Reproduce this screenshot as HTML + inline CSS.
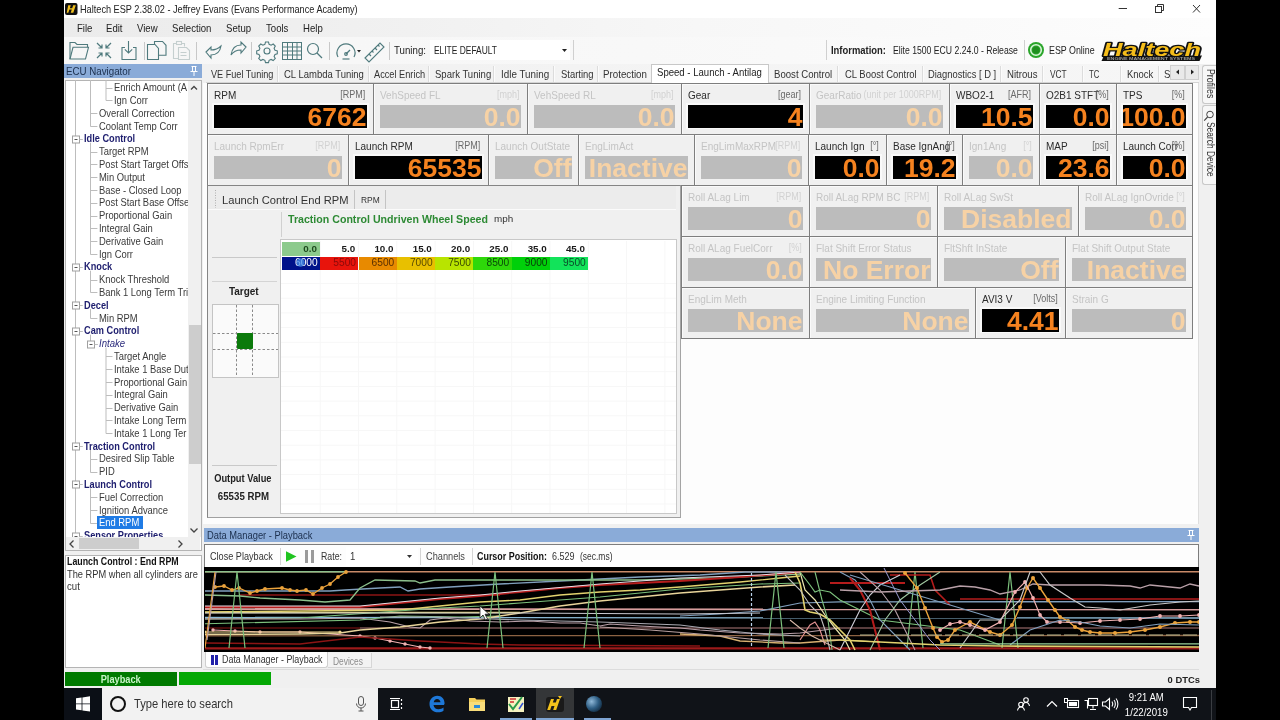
<!DOCTYPE html>
<html><head><meta charset="utf-8"><style>
html,body{margin:0;padding:0;width:1280px;height:720px;overflow:hidden;background:#000;}
body{position:relative;font-family:"Liberation Sans",sans-serif;}
.a{position:absolute;box-sizing:border-box;}
.t{position:absolute;white-space:nowrap;}
#root{position:absolute;left:0;top:0;width:1280px;height:720px;will-change:transform;}
svg{position:absolute;overflow:visible;}
</style></head><body><div id="root">
<div class="a" style="left:0px;top:0px;width:1280px;height:720px;background:#000;"></div>
<div class="a" style="left:64px;top:0px;width:1152px;height:688px;background:#f0f0f0;"></div>
<div class="a" style="left:64px;top:0px;width:1152px;height:18px;background:#ffffff;"></div>
<div class="a" style="left:64px;top:18px;width:1152px;height:19px;background:linear-gradient(to right,#ebebeb 0%,#f1f1f1 30%,#f7f7f7 55%,#fdfdfd 100%);"></div>
<div class="a" style="left:64px;top:37px;width:1152px;height:27px;background:linear-gradient(to right,#f6f6f6 0%,#f8f8f8 50%,#fcfcfc 100%);"></div>
<svg style="left:65px;top:3px" width="13" height="12" viewBox="0 0 13 12"><rect x="0" y="0" width="12.5" height="12" rx="2" fill="#111"/><path d="M3.2 2.2h2.6l-1 3h2.4l1-3h2.6l-2.5 7.6h-2.6l1.1-3.2h-2.4l-1.1 3.2H1.7z" fill="#f0c020"/></svg>
<div class="t" style="left:80.00px;top:3.14px;font-size:10.2px;line-height:13px;color:#222;transform:scaleX(0.8992);transform-origin:left center;">Haltech ESP 2.38.02 - Jeffrey Evans (Evans Performance Academy)</div>
<svg style="left:1110px;top:0px" width="106" height="18" viewBox="0 0 106 18"><line x1="8.7" y1="8.5" x2="17" y2="8.5" stroke="#333" stroke-width="1"/><rect x="45.5" y="6.5" width="6" height="6" fill="none" stroke="#333" stroke-width="1"/><path d="M47.5 6.5V4.5h6v6h-2" fill="none" stroke="#333" stroke-width="1"/><path d="M83 5l7 7.5M90 5l-7 7.5" stroke="#333" stroke-width="1"/></svg>
<div class="t" style="left:77.00px;top:21.64px;font-size:10.2px;line-height:13px;color:#222;transform:scaleX(0.9412);transform-origin:left center;">File</div>
<div class="t" style="left:106.00px;top:21.64px;font-size:10.2px;line-height:13px;color:#222;transform:scaleX(0.9412);transform-origin:left center;">Edit</div>
<div class="t" style="left:137.00px;top:21.64px;font-size:10.2px;line-height:13px;color:#222;transform:scaleX(0.9412);transform-origin:left center;">View</div>
<div class="t" style="left:172.00px;top:21.64px;font-size:10.2px;line-height:13px;color:#222;transform:scaleX(0.9412);transform-origin:left center;">Selection</div>
<div class="t" style="left:226.00px;top:21.64px;font-size:10.2px;line-height:13px;color:#222;transform:scaleX(0.9412);transform-origin:left center;">Setup</div>
<div class="t" style="left:266.00px;top:21.64px;font-size:10.2px;line-height:13px;color:#222;transform:scaleX(0.9412);transform-origin:left center;">Tools</div>
<div class="t" style="left:303.00px;top:21.64px;font-size:10.2px;line-height:13px;color:#222;transform:scaleX(0.9412);transform-origin:left center;">Help</div>
<svg style="left:64px;top:37px" width="760" height="27" viewBox="0 0 760 27"><path d="M6 22V5.5h5l2 2h10.5v2.8" fill="none" stroke="#4f7a7d" stroke-width="1.1"/><path d="M6 22l3-11.7h15.5l-3 11.7z" fill="none" stroke="#4f7a7d" stroke-width="1.1"/><g stroke="#4f7a7d" stroke-width="1.2" fill="none"><path d="M33 6l5 5M38 7.5V11h-3.5M47 6l-5 5M42 7.5V11h3.5M33 21l5-5M38 19.5V16h-3.5M47 21l-5-5M42 19.5V16h3.5"/></g><g stroke="#4f7a7d" stroke-width="1.1" fill="none"><path d="M64.5 4v12M60.8 12.3l3.7 3.7 3.7-3.7M61 10.5h-3v12h14v-12h-3"/></g><line x1="80.5" y1="5" x2="80.5" y2="23" stroke="#c8c8c8"/><g stroke="#4f7a7d" stroke-width="1.1" fill="none"><path d="M83.5 7.5v15h11v-11l-3.5-4z"/><path d="M90.5 7.5V4.5h8l3.5 3.8v10h-7.5"/></g><g stroke="#c5cfcf" stroke-width="1.1" fill="none"><path d="M112.5 6.5h-3v15h5"/><path d="M117.5 6.5h3v3"/><rect x="112.5" y="4.5" width="5" height="3"/><path d="M114.5 10.5h8l3 3v9h-11z"/><path d="M116.5 15.5h6M116.5 18.5h6"/></g><line x1="132.5" y1="5" x2="132.5" y2="23" stroke="#c8c8c8"/><g stroke="#4f7a7d" stroke-width="1.1" fill="none"><path d="M142 15l5-5v3c5 0 8-2 10-4-1 6-5 9-10 9v3z"/><path d="M182 10l-5-5v3c-5 0-9 3-10 10 2-3 5-5 10-5v3z"/></g><line x1="187.5" y1="5" x2="187.5" y2="23" stroke="#c8c8c8"/><g transform="translate(203,14)" stroke="#4f7a7d" stroke-width="1.1" fill="none"><circle r="3"/><path d="M-1.5 -9h3l0.6 2.3 2 0.9 2.1-1.2 2.1 2.1-1.2 2.1 0.9 2 2.3 0.6v3l-2.3 0.6-0.9 2 1.2 2.1-2.1 2.1-2.1-1.2-2 0.9-0.6 2.3h-3l-0.6-2.3-2-0.9-2.1 1.2-2.1-2.1 1.2-2.1-0.9-2-2.3-0.6v-3l2.3-0.6 0.9-2-1.2-2.1 2.1-2.1 2.1 1.2 2-0.9z"/></g><g stroke="#4f7a7d" stroke-width="1" fill="none"><rect x="218.5" y="5.5" width="19" height="17"/><path d="M223.5 5.5v17M228.5 5.5v17M233 5.5v17M218.5 10h19M218.5 14h19M218.5 18h19"/></g><g stroke="#4f7a7d" stroke-width="1.2" fill="none"><circle cx="249" cy="12" r="5.5"/><path d="M253 16l5 5"/></g><line x1="265.5" y1="5" x2="265.5" y2="23" stroke="#c8c8c8"/><g stroke="#4f7a7d" stroke-width="1.2" fill="none"><path d="M274 20a9 9 0 1 1 16 0"/><path d="M282 17l4-4"/><circle cx="282" cy="17" r="1.3"/><path d="M278.5 22h7"/></g><path d="M293 13h4l-2 2.5z" fill="#222"/><g stroke="#4f7a7d" stroke-width="1.1" fill="none"><path d="M301 21l15-15 4 4-15 15z"/><path d="M305 17l2 2M308 14l1.5 1.5M311 11l2 2M314 8l1.5 1.5"/></g><line x1="325.5" y1="5" x2="325.5" y2="23" stroke="#c8c8c8"/></svg>
<div class="t" style="left:394.00px;top:44.14px;font-size:10.2px;line-height:13px;color:#222;transform:scaleX(0.9512);transform-origin:left center;">Tuning:</div>
<div class="a" style="left:430px;top:40px;width:140px;height:20px;background:#ffffff;"></div>
<div class="t" style="left:434.00px;top:44.14px;font-size:10.2px;line-height:13px;color:#222;transform:scaleX(0.8254);transform-origin:left center;">ELITE DEFAULT</div>
<svg style="left:562px;top:49px" width="6" height="4"><path d="M0 0h5l-2.5 3z" fill="#222"/></svg>
<div class="a" style="left:573px;top:40px;width:1px;height:20px;background:#d0d0d0;"></div>
<div class="a" style="left:826px;top:40px;width:1px;height:20px;background:#d0d0d0;"></div>
<div class="t" style="left:831.00px;top:44.14px;font-size:10.2px;line-height:13px;color:#222;font-weight:bold;transform:scaleX(0.9246);transform-origin:left center;">Information:</div>
<div class="t" style="left:892.50px;top:44.14px;font-size:10.2px;line-height:13px;color:#222;transform:scaleX(0.8480);transform-origin:left center;">Elite 1500 ECU 2.24.0 - Release</div>
<div class="a" style="left:1024px;top:40px;width:1px;height:20px;background:#d0d0d0;"></div>
<svg style="left:1027px;top:41px" width="18" height="18" viewBox="0 0 18 18"><circle cx="9" cy="9" r="8" fill="#2aa52a"/><circle cx="9" cy="9" r="5.3" fill="none" stroke="#d8f5d8" stroke-width="1.6"/><circle cx="9" cy="9" r="3.6" fill="#1f8f1f"/></svg>
<div class="t" style="left:1048.70px;top:44.14px;font-size:10.2px;line-height:13px;color:#222;transform:scaleX(0.8698);transform-origin:left center;">ESP Online</div>
<svg style="left:1098px;top:38px" width="110" height="26" viewBox="0 0 110 26"><path d="M6 17.5h98l-2.5 5.5H3.5z" fill="#111"/><text x="5" y="18" textLength="98" lengthAdjust="spacingAndGlyphs" font-family="Liberation Sans" font-weight="bold" font-style="italic" font-size="19" fill="#f5bd1a" stroke="#111" stroke-width="2.6" paint-order="stroke" stroke-linejoin="round">Haltech</text><text x="9" y="22" textLength="88" lengthAdjust="spacingAndGlyphs" font-family="Liberation Sans" font-weight="bold" font-size="4" fill="#9a9a9a">ENGINE MANAGEMENT SYSTEMS</text></svg>
<div class="a" style="left:64px;top:64px;width:138px;height:14px;background:#8aabd8;"></div>
<div class="t" style="left:66.00px;top:64.94px;font-size:10.2px;line-height:13px;color:#1b2f4d;transform:scaleX(0.9556);transform-origin:left center;">ECU Navigator</div>
<svg style="left:189px;top:65px" width="10" height="12" viewBox="0 0 10 12"><path d="M2.5 1.5h5M3.5 1.5v5M6.5 1.5v5M1.5 6.5h7M5 6.5v4.5" stroke="#fff" stroke-width="1" fill="none"/></svg>
<div class="a" style="left:64px;top:78px;width:138px;height:474px;background:#f0f0f0;"></div>
<div class="a" style="left:65px;top:80px;width:137px;height:471px;background:#ffffff;border:1px solid #b4b4b4;"></div>
<div class="a" style="left:188px;top:81px;width:13px;height:456px;background:#f0f0f0;"></div>
<div class="a" style="left:188.5px;top:325px;width:12.0px;height:139px;background:#cdcdcd;"></div>
<svg style="left:189px;top:84px" width="10" height="8"><path d="M2 5.5l3-3 3 3" stroke="#444" stroke-width="1.3" fill="none"/></svg>
<svg style="left:189px;top:526px" width="10" height="8"><path d="M1.5 2.5l3.5 3.5 3.5-3.5" stroke="#444" stroke-width="1.3" fill="none"/></svg>
<div class="a" style="left:66px;top:537px;width:134px;height:13px;background:#f0f0f0;"></div>
<div class="a" style="left:79px;top:538px;width:60px;height:11px;background:#cdcdcd;"></div>
<svg style="left:68px;top:539px" width="8" height="10"><path d="M5.5 1.5l-3.5 3.5 3.5 3.5" stroke="#444" stroke-width="1.3" fill="none"/></svg>
<svg style="left:176px;top:539px" width="8" height="10"><path d="M2.5 1.5l3.5 3.5-3.5 3.5" stroke="#444" stroke-width="1.3" fill="none"/></svg>
<svg style="left:0;top:0" width="1280" height="720" viewBox="0 0 1280 720"><line x1="75.5" y1="80" x2="75.5" y2="537" stroke="#bdbdbd" stroke-width="1"/><line x1="90.5" y1="80" x2="90.5" y2="126.5" stroke="#bdbdbd" stroke-width="1"/><line x1="106" y1="80" x2="106" y2="100.5" stroke="#bdbdbd" stroke-width="1"/><line x1="90.5" y1="142.7" x2="90.5" y2="254.5" stroke="#bdbdbd" stroke-width="1"/><line x1="90.5" y1="270.70000000000005" x2="90.5" y2="292.5" stroke="#bdbdbd" stroke-width="1"/><line x1="90.5" y1="309.1" x2="90.5" y2="318.5" stroke="#bdbdbd" stroke-width="1"/><line x1="90.5" y1="334.70000000000005" x2="90.5" y2="344.5" stroke="#bdbdbd" stroke-width="1"/><line x1="90.5" y1="449.90000000000003" x2="90.5" y2="472.5" stroke="#bdbdbd" stroke-width="1"/><line x1="90.5" y1="488.3" x2="90.5" y2="523.5" stroke="#bdbdbd" stroke-width="1"/><line x1="106" y1="347.5" x2="106" y2="433.5" stroke="#bdbdbd" stroke-width="1"/><line x1="106.0" y1="88.5" x2="112.5" y2="88.5" stroke="#bdbdbd" stroke-width="1"/><line x1="106.0" y1="100.5" x2="112.5" y2="100.5" stroke="#bdbdbd" stroke-width="1"/><line x1="90.5" y1="113.5" x2="97.4" y2="113.5" stroke="#bdbdbd" stroke-width="1"/><line x1="90.5" y1="126.5" x2="97.4" y2="126.5" stroke="#bdbdbd" stroke-width="1"/><rect x="72.5" y="136.0" width="7" height="7" fill="#fff" stroke="#a0a0a0" stroke-width="1"/><line x1="74.5" y1="139.5" x2="77.5" y2="139.5" stroke="#555" stroke-width="1"/><line x1="79.5" y1="139.5" x2="82.8" y2="139.5" stroke="#bdbdbd" stroke-width="1"/><line x1="90.5" y1="152.5" x2="97.4" y2="152.5" stroke="#bdbdbd" stroke-width="1"/><line x1="90.5" y1="164.5" x2="97.4" y2="164.5" stroke="#bdbdbd" stroke-width="1"/><line x1="90.5" y1="177.5" x2="97.4" y2="177.5" stroke="#bdbdbd" stroke-width="1"/><line x1="90.5" y1="190.5" x2="97.4" y2="190.5" stroke="#bdbdbd" stroke-width="1"/><line x1="90.5" y1="203.5" x2="97.4" y2="203.5" stroke="#bdbdbd" stroke-width="1"/><line x1="90.5" y1="216.5" x2="97.4" y2="216.5" stroke="#bdbdbd" stroke-width="1"/><line x1="90.5" y1="228.5" x2="97.4" y2="228.5" stroke="#bdbdbd" stroke-width="1"/><line x1="90.5" y1="241.5" x2="97.4" y2="241.5" stroke="#bdbdbd" stroke-width="1"/><line x1="90.5" y1="254.5" x2="97.4" y2="254.5" stroke="#bdbdbd" stroke-width="1"/><rect x="72.5" y="264.0" width="7" height="7" fill="#fff" stroke="#a0a0a0" stroke-width="1"/><line x1="74.5" y1="267.5" x2="77.5" y2="267.5" stroke="#555" stroke-width="1"/><line x1="79.5" y1="267.5" x2="82.8" y2="267.5" stroke="#bdbdbd" stroke-width="1"/><line x1="90.5" y1="280.5" x2="97.4" y2="280.5" stroke="#bdbdbd" stroke-width="1"/><line x1="90.5" y1="292.5" x2="97.4" y2="292.5" stroke="#bdbdbd" stroke-width="1"/><rect x="72.5" y="302.0" width="7" height="7" fill="#fff" stroke="#a0a0a0" stroke-width="1"/><line x1="74.5" y1="305.5" x2="77.5" y2="305.5" stroke="#555" stroke-width="1"/><line x1="79.5" y1="305.5" x2="82.8" y2="305.5" stroke="#bdbdbd" stroke-width="1"/><line x1="90.5" y1="318.5" x2="97.4" y2="318.5" stroke="#bdbdbd" stroke-width="1"/><rect x="72.5" y="328.0" width="7" height="7" fill="#fff" stroke="#a0a0a0" stroke-width="1"/><line x1="74.5" y1="331.5" x2="77.5" y2="331.5" stroke="#555" stroke-width="1"/><line x1="79.5" y1="331.5" x2="82.8" y2="331.5" stroke="#bdbdbd" stroke-width="1"/><rect x="87.5" y="341.0" width="7" height="7" fill="#fff" stroke="#a0a0a0" stroke-width="1"/><line x1="89.5" y1="344.5" x2="92.5" y2="344.5" stroke="#555" stroke-width="1"/><line x1="94.5" y1="344.5" x2="97.9" y2="344.5" stroke="#bdbdbd" stroke-width="1"/><line x1="106.0" y1="356.5" x2="112.5" y2="356.5" stroke="#bdbdbd" stroke-width="1"/><line x1="106.0" y1="369.5" x2="112.5" y2="369.5" stroke="#bdbdbd" stroke-width="1"/><line x1="106.0" y1="382.5" x2="112.5" y2="382.5" stroke="#bdbdbd" stroke-width="1"/><line x1="106.0" y1="395.5" x2="112.5" y2="395.5" stroke="#bdbdbd" stroke-width="1"/><line x1="106.0" y1="408.5" x2="112.5" y2="408.5" stroke="#bdbdbd" stroke-width="1"/><line x1="106.0" y1="420.5" x2="112.5" y2="420.5" stroke="#bdbdbd" stroke-width="1"/><line x1="106.0" y1="433.5" x2="112.5" y2="433.5" stroke="#bdbdbd" stroke-width="1"/><rect x="72.5" y="443.0" width="7" height="7" fill="#fff" stroke="#a0a0a0" stroke-width="1"/><line x1="74.5" y1="446.5" x2="77.5" y2="446.5" stroke="#555" stroke-width="1"/><line x1="79.5" y1="446.5" x2="82.8" y2="446.5" stroke="#bdbdbd" stroke-width="1"/><line x1="90.5" y1="459.5" x2="97.4" y2="459.5" stroke="#bdbdbd" stroke-width="1"/><line x1="90.5" y1="472.5" x2="97.4" y2="472.5" stroke="#bdbdbd" stroke-width="1"/><rect x="72.5" y="481.0" width="7" height="7" fill="#fff" stroke="#a0a0a0" stroke-width="1"/><line x1="74.5" y1="484.5" x2="77.5" y2="484.5" stroke="#555" stroke-width="1"/><line x1="79.5" y1="484.5" x2="82.8" y2="484.5" stroke="#bdbdbd" stroke-width="1"/><line x1="90.5" y1="497.5" x2="97.4" y2="497.5" stroke="#bdbdbd" stroke-width="1"/><line x1="90.5" y1="510.5" x2="97.4" y2="510.5" stroke="#bdbdbd" stroke-width="1"/><line x1="90.5" y1="523.5" x2="97.4" y2="523.5" stroke="#bdbdbd" stroke-width="1"/><rect x="72.5" y="533.0" width="7" height="7" fill="#fff" stroke="#a0a0a0" stroke-width="1"/><line x1="74.5" y1="536.5" x2="77.5" y2="536.5" stroke="#555" stroke-width="1"/><line x1="79.5" y1="536.5" x2="82.8" y2="536.5" stroke="#bdbdbd" stroke-width="1"/></svg>
<div class="a" style="left:96.5px;top:516px;width:46.5px;height:12.5px;background:#1f7be5;"></div>
<div class="t" style="left:114.00px;top:81.14px;font-size:10.2px;line-height:13px;color:#3a3a3a;transform:scaleX(0.9224);transform-origin:left center;">Enrich Amount (A</div>
<div class="t" style="left:114.00px;top:93.94px;font-size:10.2px;line-height:13px;color:#3a3a3a;transform:scaleX(0.9224);transform-origin:left center;">Ign Corr</div>
<div class="t" style="left:98.90px;top:106.74px;font-size:10.2px;line-height:13px;color:#3a3a3a;transform:scaleX(0.9224);transform-origin:left center;">Overall Correction</div>
<div class="t" style="left:98.90px;top:119.54px;font-size:10.2px;line-height:13px;color:#3a3a3a;transform:scaleX(0.9224);transform-origin:left center;">Coolant Temp Corr</div>
<div class="t" style="left:83.80px;top:132.34px;font-size:10.2px;line-height:13px;color:#1d1d6e;font-weight:bold;transform:scaleX(0.9035);transform-origin:left center;">Idle Control</div>
<div class="t" style="left:98.90px;top:145.14px;font-size:10.2px;line-height:13px;color:#3a3a3a;transform:scaleX(0.9224);transform-origin:left center;">Target RPM</div>
<div class="t" style="left:98.90px;top:157.94px;font-size:10.2px;line-height:13px;color:#3a3a3a;transform:scaleX(0.9224);transform-origin:left center;">Post Start Target Offs</div>
<div class="t" style="left:98.90px;top:170.74px;font-size:10.2px;line-height:13px;color:#3a3a3a;transform:scaleX(0.9224);transform-origin:left center;">Min Output</div>
<div class="t" style="left:98.90px;top:183.54px;font-size:10.2px;line-height:13px;color:#3a3a3a;transform:scaleX(0.9224);transform-origin:left center;">Base - Closed Loop</div>
<div class="t" style="left:98.90px;top:196.34px;font-size:10.2px;line-height:13px;color:#3a3a3a;transform:scaleX(0.9224);transform-origin:left center;">Post Start Base Offset</div>
<div class="t" style="left:98.90px;top:209.14px;font-size:10.2px;line-height:13px;color:#3a3a3a;transform:scaleX(0.9224);transform-origin:left center;">Proportional Gain</div>
<div class="t" style="left:98.90px;top:221.94px;font-size:10.2px;line-height:13px;color:#3a3a3a;transform:scaleX(0.9224);transform-origin:left center;">Integral Gain</div>
<div class="t" style="left:98.90px;top:234.74px;font-size:10.2px;line-height:13px;color:#3a3a3a;transform:scaleX(0.9224);transform-origin:left center;">Derivative Gain</div>
<div class="t" style="left:98.90px;top:247.54px;font-size:10.2px;line-height:13px;color:#3a3a3a;transform:scaleX(0.9224);transform-origin:left center;">Ign Corr</div>
<div class="t" style="left:83.80px;top:260.34px;font-size:10.2px;line-height:13px;color:#1d1d6e;font-weight:bold;transform:scaleX(0.9035);transform-origin:left center;">Knock</div>
<div class="t" style="left:98.90px;top:273.14px;font-size:10.2px;line-height:13px;color:#3a3a3a;transform:scaleX(0.9224);transform-origin:left center;">Knock Threshold</div>
<div class="t" style="left:98.90px;top:285.94px;font-size:10.2px;line-height:13px;color:#3a3a3a;transform:scaleX(0.9224);transform-origin:left center;">Bank 1 Long Term Tri</div>
<div class="t" style="left:83.80px;top:298.74px;font-size:10.2px;line-height:13px;color:#1d1d6e;font-weight:bold;transform:scaleX(0.9035);transform-origin:left center;">Decel</div>
<div class="t" style="left:98.90px;top:311.54px;font-size:10.2px;line-height:13px;color:#3a3a3a;transform:scaleX(0.9224);transform-origin:left center;">Min RPM</div>
<div class="t" style="left:83.80px;top:324.34px;font-size:10.2px;line-height:13px;color:#1d1d6e;font-weight:bold;transform:scaleX(0.9035);transform-origin:left center;">Cam Control</div>
<div class="t" style="left:98.90px;top:337.14px;font-size:10.2px;line-height:13px;color:#2d2d7d;font-style:italic;transform:scaleX(0.9412);transform-origin:left center;">Intake</div>
<div class="t" style="left:114.00px;top:349.94px;font-size:10.2px;line-height:13px;color:#3a3a3a;transform:scaleX(0.9224);transform-origin:left center;">Target Angle</div>
<div class="t" style="left:114.00px;top:362.74px;font-size:10.2px;line-height:13px;color:#3a3a3a;transform:scaleX(0.9224);transform-origin:left center;">Intake 1 Base Dut</div>
<div class="t" style="left:114.00px;top:375.54px;font-size:10.2px;line-height:13px;color:#3a3a3a;transform:scaleX(0.9224);transform-origin:left center;">Proportional Gain</div>
<div class="t" style="left:114.00px;top:388.34px;font-size:10.2px;line-height:13px;color:#3a3a3a;transform:scaleX(0.9224);transform-origin:left center;">Integral Gain</div>
<div class="t" style="left:114.00px;top:401.14px;font-size:10.2px;line-height:13px;color:#3a3a3a;transform:scaleX(0.9224);transform-origin:left center;">Derivative Gain</div>
<div class="t" style="left:114.00px;top:413.94px;font-size:10.2px;line-height:13px;color:#3a3a3a;transform:scaleX(0.9224);transform-origin:left center;">Intake Long Term</div>
<div class="t" style="left:114.00px;top:426.74px;font-size:10.2px;line-height:13px;color:#3a3a3a;transform:scaleX(0.9224);transform-origin:left center;">Intake 1 Long Ter</div>
<div class="t" style="left:83.80px;top:439.54px;font-size:10.2px;line-height:13px;color:#1d1d6e;font-weight:bold;transform:scaleX(0.9035);transform-origin:left center;">Traction Control</div>
<div class="t" style="left:98.90px;top:452.34px;font-size:10.2px;line-height:13px;color:#3a3a3a;transform:scaleX(0.9224);transform-origin:left center;">Desired Slip Table</div>
<div class="t" style="left:98.90px;top:465.14px;font-size:10.2px;line-height:13px;color:#3a3a3a;transform:scaleX(0.9224);transform-origin:left center;">PID</div>
<div class="t" style="left:83.80px;top:477.94px;font-size:10.2px;line-height:13px;color:#1d1d6e;font-weight:bold;transform:scaleX(0.9035);transform-origin:left center;">Launch Control</div>
<div class="t" style="left:98.90px;top:490.74px;font-size:10.2px;line-height:13px;color:#3a3a3a;transform:scaleX(0.9224);transform-origin:left center;">Fuel Correction</div>
<div class="t" style="left:98.90px;top:503.54px;font-size:10.2px;line-height:13px;color:#3a3a3a;transform:scaleX(0.9224);transform-origin:left center;">Ignition Advance</div>
<div class="t" style="left:98.90px;top:516.34px;font-size:10.2px;line-height:13px;color:#ffffff;transform:scaleX(0.9224);transform-origin:left center;">End RPM</div>
<div class="t" style="left:83.80px;top:529.14px;font-size:10.2px;line-height:13px;color:#1d1d6e;font-weight:bold;transform:scaleX(0.9035);transform-origin:left center;">Sensor Properties</div>
<div class="a" style="left:66px;top:537px;width:134px;height:13px;background:#f0f0f0;"></div>
<div class="a" style="left:79px;top:538px;width:60px;height:11px;background:#cdcdcd;"></div>
<svg style="left:68px;top:539px" width="8" height="10"><path d="M5.5 1.5l-3.5 3.5 3.5 3.5" stroke="#444" stroke-width="1.3" fill="none"/></svg>
<svg style="left:176px;top:539px" width="8" height="10"><path d="M2.5 1.5l3.5 3.5-3.5 3.5" stroke="#444" stroke-width="1.3" fill="none"/></svg>
<div class="a" style="left:188px;top:81px;width:13px;height:456px;background:#f0f0f0;"></div>
<div class="a" style="left:188.5px;top:325px;width:12.0px;height:139px;background:#cdcdcd;"></div>
<svg style="left:189px;top:84px" width="10" height="8"><path d="M2 5.5l3-3 3 3" stroke="#444" stroke-width="1.3" fill="none"/></svg>
<svg style="left:189px;top:526px" width="10" height="8"><path d="M1.5 2.5l3.5 3.5 3.5-3.5" stroke="#444" stroke-width="1.3" fill="none"/></svg>
<div class="a" style="left:65px;top:555px;width:137px;height:113px;background:#ffffff;border:1px solid #b4b4b4;"></div>
<div class="t" style="left:67.00px;top:555.24px;font-size:10.2px;line-height:13px;color:#111;font-weight:bold;transform:scaleX(0.8654);transform-origin:left center;">Launch Control : End RPM</div>
<div class="t" style="left:67.00px;top:567.94px;font-size:10.2px;line-height:13px;color:#333;transform:scaleX(0.9098);transform-origin:left center;">The RPM when all cylinders are</div>
<div class="t" style="left:67.00px;top:579.74px;font-size:10.2px;line-height:13px;color:#333;transform:scaleX(0.9412);transform-origin:left center;">cut</div>
<div class="a" style="left:203px;top:64px;width:996px;height:19px;background:linear-gradient(to right,#f0f0f0,#f4f4f4 50%,#f6f6f6);"></div>
<div class="a" style="left:206px;top:82px;width:993px;height:1px;background:#d4d4d4;"></div>
<div class="a" style="left:277px;top:66px;width:1px;height:16px;background:#dcdcdc;"></div>
<div class="a" style="left:278px;top:66px;width:1px;height:16px;background:#fbfbfb;"></div>
<div class="a" style="left:368px;top:66px;width:1px;height:16px;background:#dcdcdc;"></div>
<div class="a" style="left:369px;top:66px;width:1px;height:16px;background:#fbfbfb;"></div>
<div class="a" style="left:428px;top:66px;width:1px;height:16px;background:#dcdcdc;"></div>
<div class="a" style="left:429px;top:66px;width:1px;height:16px;background:#fbfbfb;"></div>
<div class="a" style="left:493px;top:66px;width:1px;height:16px;background:#dcdcdc;"></div>
<div class="a" style="left:494px;top:66px;width:1px;height:16px;background:#fbfbfb;"></div>
<div class="a" style="left:553px;top:66px;width:1px;height:16px;background:#dcdcdc;"></div>
<div class="a" style="left:554px;top:66px;width:1px;height:16px;background:#fbfbfb;"></div>
<div class="a" style="left:597px;top:66px;width:1px;height:16px;background:#dcdcdc;"></div>
<div class="a" style="left:598px;top:66px;width:1px;height:16px;background:#fbfbfb;"></div>
<div class="a" style="left:837px;top:66px;width:1px;height:16px;background:#dcdcdc;"></div>
<div class="a" style="left:838px;top:66px;width:1px;height:16px;background:#fbfbfb;"></div>
<div class="a" style="left:922px;top:66px;width:1px;height:16px;background:#dcdcdc;"></div>
<div class="a" style="left:923px;top:66px;width:1px;height:16px;background:#fbfbfb;"></div>
<div class="a" style="left:1000px;top:66px;width:1px;height:16px;background:#dcdcdc;"></div>
<div class="a" style="left:1001px;top:66px;width:1px;height:16px;background:#fbfbfb;"></div>
<div class="a" style="left:1042px;top:66px;width:1px;height:16px;background:#dcdcdc;"></div>
<div class="a" style="left:1043px;top:66px;width:1px;height:16px;background:#fbfbfb;"></div>
<div class="a" style="left:1082px;top:66px;width:1px;height:16px;background:#dcdcdc;"></div>
<div class="a" style="left:1083px;top:66px;width:1px;height:16px;background:#fbfbfb;"></div>
<div class="a" style="left:1120px;top:66px;width:1px;height:16px;background:#dcdcdc;"></div>
<div class="a" style="left:1121px;top:66px;width:1px;height:16px;background:#fbfbfb;"></div>
<div class="a" style="left:1158px;top:66px;width:1px;height:16px;background:#dcdcdc;"></div>
<div class="a" style="left:1159px;top:66px;width:1px;height:16px;background:#fbfbfb;"></div>
<div class="a" style="left:651px;top:64px;width:118px;height:19px;background:#ffffff;border:1px solid #c8c8c8;border-bottom:none;"></div>
<div class="t" style="left:210.50px;top:67.64px;font-size:10.2px;line-height:13px;color:#333;transform:scaleX(0.8962);transform-origin:left center;">VE Fuel Tuning</div>
<div class="t" style="left:283.75px;top:67.64px;font-size:10.2px;line-height:13px;color:#333;transform:scaleX(0.9323);transform-origin:left center;">CL Lambda Tuning</div>
<div class="t" style="left:373.75px;top:67.64px;font-size:10.2px;line-height:13px;color:#333;transform:scaleX(0.9041);transform-origin:left center;">Accel Enrich</div>
<div class="t" style="left:435.00px;top:67.64px;font-size:10.2px;line-height:13px;color:#333;transform:scaleX(0.9359);transform-origin:left center;">Spark Tuning</div>
<div class="t" style="left:500.50px;top:67.64px;font-size:10.2px;line-height:13px;color:#333;transform:scaleX(0.9669);transform-origin:left center;">Idle Tuning</div>
<div class="t" style="left:560.50px;top:67.64px;font-size:10.2px;line-height:13px;color:#333;transform:scaleX(0.9246);transform-origin:left center;">Starting</div>
<div class="t" style="left:603.00px;top:67.64px;font-size:10.2px;line-height:13px;color:#333;transform:scaleX(0.9581);transform-origin:left center;">Protection</div>
<div class="t" style="left:773.75px;top:67.64px;font-size:10.2px;line-height:13px;color:#333;transform:scaleX(0.9426);transform-origin:left center;">Boost Control</div>
<div class="t" style="left:844.50px;top:67.64px;font-size:10.2px;line-height:13px;color:#333;transform:scaleX(0.9283);transform-origin:left center;">CL Boost Control</div>
<div class="t" style="left:928.00px;top:67.64px;font-size:10.2px;line-height:13px;color:#333;transform:scaleX(0.9191);transform-origin:left center;">Diagnostics [ D ]</div>
<div class="t" style="left:1007.00px;top:67.64px;font-size:10.2px;line-height:13px;color:#333;transform:scaleX(0.9441);transform-origin:left center;">Nitrous</div>
<div class="t" style="left:1049.50px;top:67.64px;font-size:10.2px;line-height:13px;color:#333;transform:scaleX(0.8211);transform-origin:left center;">VCT</div>
<div class="t" style="left:1088.75px;top:67.64px;font-size:10.2px;line-height:13px;color:#333;transform:scaleX(0.7539);transform-origin:left center;">TC</div>
<div class="t" style="left:1126.50px;top:67.64px;font-size:10.2px;line-height:13px;color:#333;transform:scaleX(0.9260);transform-origin:left center;">Knock</div>
<div class="t" style="left:657.00px;top:66.14px;font-size:10.2px;line-height:13px;color:#222;transform:scaleX(0.9400);transform-origin:left center;">Speed - Launch - Antilag</div>
<div class="t" style="left:1164.40px;top:67.64px;font-size:10.2px;line-height:13px;color:#333;transform:scaleX(0.9412);transform-origin:left center;">S</div>
<div class="a" style="left:1170px;top:65px;width:15px;height:15px;background:#e9e9e9;border:1px solid #cfcfcf;"></div>
<div class="a" style="left:1185px;top:65px;width:14px;height:15px;background:#e9e9e9;border:1px solid #cfcfcf;"></div>
<svg style="left:1175px;top:69px" width="6" height="7"><path d="M4 0.5v5l-3-2.5z" fill="#222"/></svg>
<svg style="left:1190px;top:69px" width="6" height="7"><path d="M1 0.5v5l3-2.5z" fill="#222"/></svg>
<div class="a" style="left:1199px;top:64px;width:17px;height:624px;background:#f0f0f0;"></div>
<div class="a" style="left:1202px;top:65px;width:14px;height:39px;background:#f7f7f7;border:1px solid #c9c9c9;border-right:none;border-radius:3px 0 0 3px;"></div>
<div class="a" style="left:1202px;top:105px;width:14px;height:80px;background:#f7f7f7;border:1px solid #c9c9c9;border-right:none;border-radius:3px 0 0 3px;"></div>
<div class="t" style="left:1203px;top:68.7px;width:13px;height:30px;"><div style="position:absolute;left:0;top:0;transform-origin:0 0;transform:translate(13px,0) rotate(90deg) scaleX(0.8615);font-size:10.2px;line-height:12px;color:#333;white-space:nowrap;">Profiles</div></div>
<div class="t" style="left:1203px;top:122px;width:13px;height:56px;"><div style="position:absolute;left:0;top:0;transform-origin:0 0;transform:translate(13px,0) rotate(90deg) scaleX(0.8247);font-size:10.2px;line-height:12px;color:#333;white-space:nowrap;">Search Device</div></div>
<svg style="left:1203px;top:110px" width="12" height="12"><circle cx="7" cy="4.5" r="3.3" fill="none" stroke="#444" stroke-width="1"/><path d="M4.6 7l-3.4 3.6" stroke="#444" stroke-width="1.1"/></svg>
<div class="a" style="left:203px;top:83px;width:996px;height:445px;background:#f0f0f0;"></div>
<div class="a" style="left:203px;top:83px;width:996px;height:441px;background:#fdfdfd;border-right:1px solid #dedede;"></div>
<div class="a" style="left:207px;top:83px;width:167px;height:52px;background:#f0f0f0;border:1px solid #7e7e7e;box-shadow:inset 1px 1px 0 #fafafa;"></div>
<div class="a" style="left:212px;top:103.0px;width:156.5px;height:26.0px;background:#f9f9f9;"></div>
<div class="a" style="left:214px;top:104.5px;width:153px;height:23.0px;background:#000;overflow:hidden;"><div class="t" style="right:0.5px;top:-3.18px;font-size:26.5px;line-height:32px;font-weight:bold;color:#f5821f;transform-origin:right center;">6762</div></div>
<div class="t" style="left:214.20px;top:88.15px;font-size:10.8px;line-height:14px;color:#2b2b2b;transform:scaleX(0.9259);transform-origin:left center;">RPM</div>
<div class="t" style="left:337.17px;top:87.94px;font-size:10.2px;line-height:13px;color:#6a6a6a;transform:scaleX(0.8824);transform-origin:right center;">[RPM]</div>
<div class="a" style="left:373px;top:83px;width:155px;height:52px;background:#f0f0f0;border:1px solid #7e7e7e;box-shadow:inset 1px 1px 0 #fafafa;"></div>
<div class="a" style="left:380px;top:104.5px;width:141px;height:23.0px;background:#bcbcbc;overflow:hidden;"><div class="t" style="right:0.5px;top:-3.18px;font-size:26.5px;line-height:32px;font-weight:bold;color:#f7d2a5;transform-origin:right center;">0.0</div></div>
<div class="t" style="left:380.20px;top:88.15px;font-size:10.8px;line-height:14px;color:#c4c4c4;transform:scaleX(0.9259);transform-origin:left center;">VehSpeed FL</div>
<div class="t" style="left:493.99px;top:87.94px;font-size:10.2px;line-height:13px;color:#d2d2d2;transform:scaleX(0.8824);transform-origin:right center;">[mph]</div>
<div class="a" style="left:527px;top:83px;width:155px;height:52px;background:#f0f0f0;border:1px solid #7e7e7e;box-shadow:inset 1px 1px 0 #fafafa;"></div>
<div class="a" style="left:534px;top:104.5px;width:141px;height:23.0px;background:#bcbcbc;overflow:hidden;"><div class="t" style="right:0.5px;top:-3.18px;font-size:26.5px;line-height:32px;font-weight:bold;color:#f7d2a5;transform-origin:right center;">0.0</div></div>
<div class="t" style="left:534.20px;top:88.15px;font-size:10.8px;line-height:14px;color:#c4c4c4;transform:scaleX(0.9259);transform-origin:left center;">VehSpeed RL</div>
<div class="t" style="left:647.99px;top:87.94px;font-size:10.2px;line-height:13px;color:#d2d2d2;transform:scaleX(0.8824);transform-origin:right center;">[mph]</div>
<div class="a" style="left:681px;top:83px;width:129px;height:52px;background:#f0f0f0;border:1px solid #7e7e7e;box-shadow:inset 1px 1px 0 #fafafa;"></div>
<div class="a" style="left:686px;top:103.0px;width:118.5px;height:26.0px;background:#f9f9f9;"></div>
<div class="a" style="left:688px;top:104.5px;width:115px;height:23.0px;background:#000;overflow:hidden;"><div class="t" style="right:0.5px;top:-3.18px;font-size:26.5px;line-height:32px;font-weight:bold;color:#f5821f;transform-origin:right center;">4</div></div>
<div class="t" style="left:688.20px;top:88.15px;font-size:10.8px;line-height:14px;color:#2b2b2b;transform:scaleX(0.9259);transform-origin:left center;">Gear</div>
<div class="t" style="left:775.42px;top:87.94px;font-size:10.2px;line-height:13px;color:#6a6a6a;transform:scaleX(0.8824);transform-origin:right center;">[gear]</div>
<div class="a" style="left:809px;top:83px;width:141px;height:52px;background:#f0f0f0;border:1px solid #7e7e7e;box-shadow:inset 1px 1px 0 #fafafa;"></div>
<div class="a" style="left:816px;top:104.5px;width:127px;height:23.0px;background:#bcbcbc;overflow:hidden;"><div class="t" style="right:0.5px;top:-3.18px;font-size:26.5px;line-height:32px;font-weight:bold;color:#f7d2a5;transform-origin:right center;">0.0</div></div>
<div class="t" style="left:816.20px;top:88.15px;font-size:10.8px;line-height:14px;color:#c4c4c4;transform:scaleX(0.9259);transform-origin:left center;">GearRatio</div>
<div class="t" style="left:853.06px;top:87.94px;font-size:10.2px;line-height:13px;color:#d2d2d2;transform:scaleX(0.8824);transform-origin:right center;">(unit per 1000RPM]</div>
<div class="a" style="left:949px;top:83px;width:91px;height:52px;background:#f0f0f0;border:1px solid #7e7e7e;box-shadow:inset 1px 1px 0 #fafafa;"></div>
<div class="a" style="left:954px;top:103.0px;width:80.5px;height:26.0px;background:#f9f9f9;"></div>
<div class="a" style="left:956px;top:104.5px;width:77px;height:23.0px;background:#000;overflow:hidden;"><div class="t" style="right:0.5px;top:-3.18px;font-size:26.5px;line-height:32px;font-weight:bold;color:#f5821f;transform-origin:right center;">10.5</div></div>
<div class="t" style="left:956.20px;top:88.15px;font-size:10.8px;line-height:14px;color:#2b2b2b;transform:scaleX(0.9259);transform-origin:left center;">WBO2-1</div>
<div class="t" style="left:1005.43px;top:87.94px;font-size:10.2px;line-height:13px;color:#6a6a6a;transform:scaleX(0.8824);transform-origin:right center;">[AFR]</div>
<div class="a" style="left:1039px;top:83px;width:78px;height:52px;background:#f0f0f0;border:1px solid #7e7e7e;box-shadow:inset 1px 1px 0 #fafafa;"></div>
<div class="a" style="left:1044px;top:103.0px;width:67.5px;height:26.0px;background:#f9f9f9;"></div>
<div class="a" style="left:1046px;top:104.5px;width:64px;height:23.0px;background:#000;overflow:hidden;"><div class="t" style="right:0.5px;top:-3.18px;font-size:26.5px;line-height:32px;font-weight:bold;color:#f5821f;transform-origin:right center;">0.0</div></div>
<div class="t" style="left:1046.20px;top:88.15px;font-size:10.8px;line-height:14px;color:#2b2b2b;transform:scaleX(0.9259);transform-origin:left center;">O2B1 STFT</div>
<div class="t" style="left:1093.76px;top:87.94px;font-size:10.2px;line-height:13px;color:#6a6a6a;transform:scaleX(0.8824);transform-origin:right center;">[%]</div>
<div class="a" style="left:1116px;top:83px;width:77px;height:52px;background:#f0f0f0;border:1px solid #7e7e7e;box-shadow:inset 1px 1px 0 #fafafa;"></div>
<div class="a" style="left:1121px;top:103.0px;width:66.5px;height:26.0px;background:#f9f9f9;"></div>
<div class="a" style="left:1123px;top:104.5px;width:63px;height:23.0px;background:#000;overflow:hidden;"><div class="t" style="right:0.5px;top:-3.18px;font-size:26.5px;line-height:32px;font-weight:bold;color:#f5821f;transform-origin:right center;">100.0</div></div>
<div class="t" style="left:1123.20px;top:88.15px;font-size:10.8px;line-height:14px;color:#2b2b2b;transform:scaleX(0.9259);transform-origin:left center;">TPS</div>
<div class="t" style="left:1169.76px;top:87.94px;font-size:10.2px;line-height:13px;color:#6a6a6a;transform:scaleX(0.8824);transform-origin:right center;">[%]</div>
<div class="a" style="left:207px;top:134px;width:142px;height:52px;background:#f0f0f0;border:1px solid #7e7e7e;box-shadow:inset 1px 1px 0 #fafafa;"></div>
<div class="a" style="left:214px;top:155.5px;width:128px;height:23.0px;background:#bcbcbc;overflow:hidden;"><div class="t" style="right:0.5px;top:-3.18px;font-size:26.5px;line-height:32px;font-weight:bold;color:#f7d2a5;transform-origin:right center;">0</div></div>
<div class="t" style="left:214.20px;top:139.15px;font-size:10.8px;line-height:14px;color:#c4c4c4;transform:scaleX(0.9259);transform-origin:left center;">Launch RpmErr</div>
<div class="t" style="left:312.17px;top:138.94px;font-size:10.2px;line-height:13px;color:#d2d2d2;transform:scaleX(0.8824);transform-origin:right center;">[RPM]</div>
<div class="a" style="left:348px;top:134px;width:141px;height:52px;background:#f0f0f0;border:1px solid #7e7e7e;box-shadow:inset 1px 1px 0 #fafafa;"></div>
<div class="a" style="left:353px;top:154.0px;width:130.5px;height:26.0px;background:#f9f9f9;"></div>
<div class="a" style="left:355px;top:155.5px;width:127px;height:23.0px;background:#000;overflow:hidden;"><div class="t" style="right:0.5px;top:-3.18px;font-size:26.5px;line-height:32px;font-weight:bold;color:#f5821f;transform-origin:right center;">65535</div></div>
<div class="t" style="left:355.20px;top:139.15px;font-size:10.8px;line-height:14px;color:#2b2b2b;transform:scaleX(0.9259);transform-origin:left center;">Launch RPM</div>
<div class="t" style="left:452.17px;top:138.94px;font-size:10.2px;line-height:13px;color:#6a6a6a;transform:scaleX(0.8824);transform-origin:right center;">[RPM]</div>
<div class="a" style="left:488px;top:134px;width:91px;height:52px;background:#f0f0f0;border:1px solid #7e7e7e;box-shadow:inset 1px 1px 0 #fafafa;"></div>
<div class="a" style="left:495px;top:155.5px;width:77px;height:23.0px;background:#bcbcbc;overflow:hidden;"><div class="t" style="right:0.5px;top:-3.18px;font-size:26.5px;line-height:32px;font-weight:bold;color:#f7d2a5;transform-origin:right center;">Off</div></div>
<div class="t" style="left:495.20px;top:139.15px;font-size:10.8px;line-height:14px;color:#c4c4c4;transform:scaleX(0.9259);transform-origin:left center;">Launch OutState</div>
<div class="a" style="left:578px;top:134px;width:117px;height:52px;background:#f0f0f0;border:1px solid #7e7e7e;box-shadow:inset 1px 1px 0 #fafafa;"></div>
<div class="a" style="left:585px;top:155.5px;width:103px;height:23.0px;background:#bcbcbc;overflow:hidden;"><div class="t" style="right:0.5px;top:-3.18px;font-size:26.5px;line-height:32px;font-weight:bold;color:#f7d2a5;transform-origin:right center;">Inactive</div></div>
<div class="t" style="left:585.20px;top:139.15px;font-size:10.8px;line-height:14px;color:#c4c4c4;transform:scaleX(0.9259);transform-origin:left center;">EngLimAct</div>
<div class="a" style="left:694px;top:134px;width:115px;height:52px;background:#f0f0f0;border:1px solid #7e7e7e;box-shadow:inset 1px 1px 0 #fafafa;"></div>
<div class="a" style="left:701px;top:155.5px;width:101px;height:23.0px;background:#bcbcbc;overflow:hidden;"><div class="t" style="right:0.5px;top:-3.18px;font-size:26.5px;line-height:32px;font-weight:bold;color:#f7d2a5;transform-origin:right center;">0</div></div>
<div class="t" style="left:701.20px;top:139.15px;font-size:10.8px;line-height:14px;color:#c4c4c4;transform:scaleX(0.9259);transform-origin:left center;">EngLimMaxRPM</div>
<div class="t" style="left:772.17px;top:138.94px;font-size:10.2px;line-height:13px;color:#d2d2d2;transform:scaleX(0.8824);transform-origin:right center;">[RPM]</div>
<div class="a" style="left:808px;top:134px;width:79px;height:52px;background:#f0f0f0;border:1px solid #7e7e7e;box-shadow:inset 1px 1px 0 #fafafa;"></div>
<div class="a" style="left:813px;top:154.0px;width:68.5px;height:26.0px;background:#f9f9f9;"></div>
<div class="a" style="left:815px;top:155.5px;width:65px;height:23.0px;background:#000;overflow:hidden;"><div class="t" style="right:0.5px;top:-3.18px;font-size:26.5px;line-height:32px;font-weight:bold;color:#f5821f;transform-origin:right center;">0.0</div></div>
<div class="t" style="left:815.20px;top:139.15px;font-size:10.8px;line-height:14px;color:#2b2b2b;transform:scaleX(0.9259);transform-origin:left center;">Launch Ign</div>
<div class="t" style="left:868.75px;top:138.94px;font-size:10.2px;line-height:13px;color:#6a6a6a;transform:scaleX(0.8824);transform-origin:right center;">[°]</div>
<div class="a" style="left:886px;top:134px;width:77px;height:52px;background:#f0f0f0;border:1px solid #7e7e7e;box-shadow:inset 1px 1px 0 #fafafa;"></div>
<div class="a" style="left:891px;top:154.0px;width:66.5px;height:26.0px;background:#f9f9f9;"></div>
<div class="a" style="left:893px;top:155.5px;width:63px;height:23.0px;background:#000;overflow:hidden;"><div class="t" style="right:0.5px;top:-3.18px;font-size:26.5px;line-height:32px;font-weight:bold;color:#f5821f;transform-origin:right center;">19.2</div></div>
<div class="t" style="left:893.20px;top:139.15px;font-size:10.8px;line-height:14px;color:#2b2b2b;transform:scaleX(0.9259);transform-origin:left center;">Base IgnAng</div>
<div class="t" style="left:944.75px;top:138.94px;font-size:10.2px;line-height:13px;color:#6a6a6a;transform:scaleX(0.8824);transform-origin:right center;">[°]</div>
<div class="a" style="left:962px;top:134px;width:78px;height:52px;background:#f0f0f0;border:1px solid #7e7e7e;box-shadow:inset 1px 1px 0 #fafafa;"></div>
<div class="a" style="left:969px;top:155.5px;width:64px;height:23.0px;background:#bcbcbc;overflow:hidden;"><div class="t" style="right:0.5px;top:-3.18px;font-size:26.5px;line-height:32px;font-weight:bold;color:#f7d2a5;transform-origin:right center;">0.0</div></div>
<div class="t" style="left:969.20px;top:139.15px;font-size:10.8px;line-height:14px;color:#c4c4c4;transform:scaleX(0.9259);transform-origin:left center;">Ign1Ang</div>
<div class="t" style="left:1021.75px;top:138.94px;font-size:10.2px;line-height:13px;color:#d2d2d2;transform:scaleX(0.8824);transform-origin:right center;">[°]</div>
<div class="a" style="left:1039px;top:134px;width:78px;height:52px;background:#f0f0f0;border:1px solid #7e7e7e;box-shadow:inset 1px 1px 0 #fafafa;"></div>
<div class="a" style="left:1044px;top:154.0px;width:67.5px;height:26.0px;background:#f9f9f9;"></div>
<div class="a" style="left:1046px;top:155.5px;width:64px;height:23.0px;background:#000;overflow:hidden;"><div class="t" style="right:0.5px;top:-3.18px;font-size:26.5px;line-height:32px;font-weight:bold;color:#f5821f;transform-origin:right center;">23.6</div></div>
<div class="t" style="left:1046.20px;top:139.15px;font-size:10.8px;line-height:14px;color:#2b2b2b;transform:scaleX(0.9259);transform-origin:left center;">MAP</div>
<div class="t" style="left:1089.79px;top:138.94px;font-size:10.2px;line-height:13px;color:#6a6a6a;transform:scaleX(0.8824);transform-origin:right center;">[psi]</div>
<div class="a" style="left:1116px;top:134px;width:77px;height:52px;background:#f0f0f0;border:1px solid #7e7e7e;box-shadow:inset 1px 1px 0 #fafafa;"></div>
<div class="a" style="left:1121px;top:154.0px;width:66.5px;height:26.0px;background:#f9f9f9;"></div>
<div class="a" style="left:1123px;top:155.5px;width:63px;height:23.0px;background:#000;overflow:hidden;"><div class="t" style="right:0.5px;top:-3.18px;font-size:26.5px;line-height:32px;font-weight:bold;color:#f5821f;transform-origin:right center;">0.0</div></div>
<div class="t" style="left:1123.20px;top:139.15px;font-size:10.8px;line-height:14px;color:#2b2b2b;transform:scaleX(0.9259);transform-origin:left center;">Launch Corr</div>
<div class="t" style="left:1169.76px;top:138.94px;font-size:10.2px;line-height:13px;color:#6a6a6a;transform:scaleX(0.8824);transform-origin:right center;">[%]</div>
<div class="a" style="left:681px;top:185px;width:129px;height:52px;background:#f0f0f0;border:1px solid #7e7e7e;box-shadow:inset 1px 1px 0 #fafafa;"></div>
<div class="a" style="left:688px;top:206.5px;width:115px;height:23.0px;background:#bcbcbc;overflow:hidden;"><div class="t" style="right:0.5px;top:-3.18px;font-size:26.5px;line-height:32px;font-weight:bold;color:#f7d2a5;transform-origin:right center;">0</div></div>
<div class="t" style="left:688.20px;top:190.15px;font-size:10.8px;line-height:14px;color:#c4c4c4;transform:scaleX(0.9259);transform-origin:left center;">Roll ALag Lim</div>
<div class="t" style="left:773.17px;top:189.94px;font-size:10.2px;line-height:13px;color:#d2d2d2;transform:scaleX(0.8824);transform-origin:right center;">[RPM]</div>
<div class="a" style="left:809px;top:185px;width:129px;height:52px;background:#f0f0f0;border:1px solid #7e7e7e;box-shadow:inset 1px 1px 0 #fafafa;"></div>
<div class="a" style="left:816px;top:206.5px;width:115px;height:23.0px;background:#bcbcbc;overflow:hidden;"><div class="t" style="right:0.5px;top:-3.18px;font-size:26.5px;line-height:32px;font-weight:bold;color:#f7d2a5;transform-origin:right center;">0</div></div>
<div class="t" style="left:816.20px;top:190.15px;font-size:10.8px;line-height:14px;color:#c4c4c4;transform:scaleX(0.9259);transform-origin:left center;">Roll ALag RPM BC</div>
<div class="t" style="left:901.17px;top:189.94px;font-size:10.2px;line-height:13px;color:#d2d2d2;transform:scaleX(0.8824);transform-origin:right center;">[RPM]</div>
<div class="a" style="left:937px;top:185px;width:142px;height:52px;background:#f0f0f0;border:1px solid #7e7e7e;box-shadow:inset 1px 1px 0 #fafafa;"></div>
<div class="a" style="left:944px;top:206.5px;width:128px;height:23.0px;background:#bcbcbc;overflow:hidden;"><div class="t" style="right:0.5px;top:-3.18px;font-size:26.5px;line-height:32px;font-weight:bold;color:#f7d2a5;transform-origin:right center;">Disabled</div></div>
<div class="t" style="left:944.20px;top:190.15px;font-size:10.8px;line-height:14px;color:#c4c4c4;transform:scaleX(0.9259);transform-origin:left center;">Roll ALag SwSt</div>
<div class="a" style="left:1078px;top:185px;width:115px;height:52px;background:#f0f0f0;border:1px solid #7e7e7e;box-shadow:inset 1px 1px 0 #fafafa;"></div>
<div class="a" style="left:1085px;top:206.5px;width:101px;height:23.0px;background:#bcbcbc;overflow:hidden;"><div class="t" style="right:0.5px;top:-3.18px;font-size:26.5px;line-height:32px;font-weight:bold;color:#f7d2a5;transform-origin:right center;">0.0</div></div>
<div class="t" style="left:1085.20px;top:190.15px;font-size:10.8px;line-height:14px;color:#c4c4c4;transform:scaleX(0.9259);transform-origin:left center;">Roll ALag IgnOvride</div>
<div class="t" style="left:1174.75px;top:189.94px;font-size:10.2px;line-height:13px;color:#d2d2d2;transform:scaleX(0.8824);transform-origin:right center;">[°]</div>
<div class="a" style="left:681px;top:236px;width:129px;height:52px;background:#f0f0f0;border:1px solid #7e7e7e;box-shadow:inset 1px 1px 0 #fafafa;"></div>
<div class="a" style="left:688px;top:257.5px;width:115px;height:23.0px;background:#bcbcbc;overflow:hidden;"><div class="t" style="right:0.5px;top:-3.18px;font-size:26.5px;line-height:32px;font-weight:bold;color:#f7d2a5;transform-origin:right center;">0.0</div></div>
<div class="t" style="left:688.20px;top:241.15px;font-size:10.8px;line-height:14px;color:#c4c4c4;transform:scaleX(0.9259);transform-origin:left center;">Roll ALag FuelCorr</div>
<div class="t" style="left:786.76px;top:240.94px;font-size:10.2px;line-height:13px;color:#d2d2d2;transform:scaleX(0.8824);transform-origin:right center;">[%]</div>
<div class="a" style="left:809px;top:236px;width:129px;height:52px;background:#f0f0f0;border:1px solid #7e7e7e;box-shadow:inset 1px 1px 0 #fafafa;"></div>
<div class="a" style="left:816px;top:257.5px;width:115px;height:23.0px;background:#bcbcbc;overflow:hidden;"><div class="t" style="right:0.5px;top:-3.18px;font-size:26.5px;line-height:32px;font-weight:bold;color:#f7d2a5;transform-origin:right center;">No Error</div></div>
<div class="t" style="left:816.20px;top:241.15px;font-size:10.8px;line-height:14px;color:#c4c4c4;transform:scaleX(0.9259);transform-origin:left center;">Flat Shift Error Status</div>
<div class="a" style="left:937px;top:236px;width:129px;height:52px;background:#f0f0f0;border:1px solid #7e7e7e;box-shadow:inset 1px 1px 0 #fafafa;"></div>
<div class="a" style="left:944px;top:257.5px;width:115px;height:23.0px;background:#bcbcbc;overflow:hidden;"><div class="t" style="right:0.5px;top:-3.18px;font-size:26.5px;line-height:32px;font-weight:bold;color:#f7d2a5;transform-origin:right center;">Off</div></div>
<div class="t" style="left:944.20px;top:241.15px;font-size:10.8px;line-height:14px;color:#c4c4c4;transform:scaleX(0.9259);transform-origin:left center;">FltShft InState</div>
<div class="a" style="left:1065px;top:236px;width:128px;height:52px;background:#f0f0f0;border:1px solid #7e7e7e;box-shadow:inset 1px 1px 0 #fafafa;"></div>
<div class="a" style="left:1072px;top:257.5px;width:114px;height:23.0px;background:#bcbcbc;overflow:hidden;"><div class="t" style="right:0.5px;top:-3.18px;font-size:26.5px;line-height:32px;font-weight:bold;color:#f7d2a5;transform-origin:right center;">Inactive</div></div>
<div class="t" style="left:1072.20px;top:241.15px;font-size:10.8px;line-height:14px;color:#c4c4c4;transform:scaleX(0.9259);transform-origin:left center;">Flat Shift Output State</div>
<div class="a" style="left:681px;top:287px;width:129px;height:52px;background:#f0f0f0;border:1px solid #7e7e7e;box-shadow:inset 1px 1px 0 #fafafa;"></div>
<div class="a" style="left:688px;top:308.5px;width:115px;height:23.0px;background:#bcbcbc;overflow:hidden;"><div class="t" style="right:0.5px;top:-3.18px;font-size:26.5px;line-height:32px;font-weight:bold;color:#f7d2a5;transform-origin:right center;">None</div></div>
<div class="t" style="left:688.20px;top:292.15px;font-size:10.8px;line-height:14px;color:#c4c4c4;transform:scaleX(0.9259);transform-origin:left center;">EngLim Meth</div>
<div class="a" style="left:809px;top:287px;width:167px;height:52px;background:#f0f0f0;border:1px solid #7e7e7e;box-shadow:inset 1px 1px 0 #fafafa;"></div>
<div class="a" style="left:816px;top:308.5px;width:153px;height:23.0px;background:#bcbcbc;overflow:hidden;"><div class="t" style="right:0.5px;top:-3.18px;font-size:26.5px;line-height:32px;font-weight:bold;color:#f7d2a5;transform-origin:right center;">None</div></div>
<div class="t" style="left:816.20px;top:292.15px;font-size:10.8px;line-height:14px;color:#c4c4c4;transform:scaleX(0.9259);transform-origin:left center;">Engine Limiting Function</div>
<div class="a" style="left:975px;top:287px;width:91px;height:52px;background:#f0f0f0;border:1px solid #7e7e7e;box-shadow:inset 1px 1px 0 #fafafa;"></div>
<div class="a" style="left:980px;top:307.0px;width:80.5px;height:26.0px;background:#f9f9f9;"></div>
<div class="a" style="left:982px;top:308.5px;width:77px;height:23.0px;background:#000;overflow:hidden;"><div class="t" style="right:0.5px;top:-3.18px;font-size:26.5px;line-height:32px;font-weight:bold;color:#f5821f;transform-origin:right center;">4.41</div></div>
<div class="t" style="left:982.20px;top:292.15px;font-size:10.8px;line-height:14px;color:#2b2b2b;transform:scaleX(0.9259);transform-origin:left center;">AVI3 V</div>
<div class="t" style="left:1029.72px;top:291.94px;font-size:10.2px;line-height:13px;color:#6a6a6a;transform:scaleX(0.8824);transform-origin:right center;">[Volts]</div>
<div class="a" style="left:1065px;top:287px;width:128px;height:52px;background:#f0f0f0;border:1px solid #7e7e7e;box-shadow:inset 1px 1px 0 #fafafa;"></div>
<div class="a" style="left:1072px;top:308.5px;width:114px;height:23.0px;background:#bcbcbc;overflow:hidden;"><div class="t" style="right:0.5px;top:-3.18px;font-size:26.5px;line-height:32px;font-weight:bold;color:#f7d2a5;transform-origin:right center;">0</div></div>
<div class="t" style="left:1072.20px;top:292.15px;font-size:10.8px;line-height:14px;color:#c4c4c4;transform:scaleX(0.9259);transform-origin:left center;">Strain G</div>
<div class="a" style="left:207px;top:185px;width:474px;height:333px;background:#f0f0f0;border:1px solid #858585;border-right-color:#a4a4a4;border-bottom-color:#a0a0a0;"></div>
<div class="a" style="left:208px;top:186px;width:468px;height:23px;background:#ececec;"></div>
<div class="a" style="left:208px;top:209px;width:468px;height:1px;background:#fbfbfb;"></div>
<svg style="left:214px;top:189px" width="3" height="20"><path d="M1.5 1v18" stroke="#b0b0b0" stroke-width="1" stroke-dasharray="1 1.5"/></svg>
<div class="t" style="left:221.90px;top:193.45px;font-size:11px;line-height:14px;color:#333;transform:scaleX(1.0142);transform-origin:left center;">Launch Control End RPM</div>
<div class="a" style="left:354px;top:190px;width:1px;height:19px;background:#c4c4c4;"></div>
<div class="t" style="left:361.00px;top:194.43px;font-size:9.6px;line-height:12px;color:#333;transform:scaleX(0.8766);transform-origin:left center;">RPM</div>
<div class="a" style="left:385px;top:190px;width:1px;height:19px;background:#c4c4c4;"></div>
<div class="a" style="left:212px;top:257px;width:65px;height:1px;background:#c9c9c9;"></div>
<div class="a" style="left:212px;top:281px;width:65px;height:1px;background:#d4d4d4;"></div>
<div class="a" style="left:212px;top:465px;width:65px;height:1px;background:#c9c9c9;"></div>
<div class="t" style="left:228.89px;top:286.13px;font-size:10px;line-height:12px;color:#222;font-weight:bold;">Target</div>
<div class="a" style="left:212px;top:304px;width:67px;height:74px;background:#fafafa;border:1px solid #c4c4c4;"></div>
<svg style="left:212px;top:304px" width="67" height="74" viewBox="0 0 67 74"><g stroke="#8a8a8a" stroke-width="1" stroke-dasharray="2.5 2"><line x1="24.5" y1="1" x2="24.5" y2="73"/><line x1="40.5" y1="1" x2="40.5" y2="73"/><line x1="1" y1="29.5" x2="66" y2="29.5"/><line x1="1" y1="45.5" x2="66" y2="45.5"/></g><rect x="25" y="29" width="16" height="16" fill="#0b7a0b" rx="1"/></svg>
<div class="t" style="left:212.17px;top:473.13px;font-size:10px;line-height:12px;color:#222;font-weight:bold;transform:scaleX(0.9292);transform-origin:center center;">Output Value</div>
<div class="t" style="left:217.40px;top:491.13px;font-size:10px;line-height:12px;color:#222;font-weight:bold;transform:scaleX(0.9677);transform-origin:center center;">65535 RPM</div>
<div class="a" style="left:281px;top:212px;width:1px;height:25px;background:#d0d0d0;"></div>
<div class="t" style="left:287.50px;top:212.15px;font-size:10.8px;line-height:14px;color:#2d8a34;font-weight:bold;transform:scaleX(0.9832);transform-origin:left center;">Traction Control Undriven Wheel Speed</div>
<div class="t" style="left:493.75px;top:212.63px;font-size:9.6px;line-height:12px;color:#333;transform:scaleX(1.0282);transform-origin:left center;">mph</div>
<div class="a" style="left:280px;top:239px;width:397px;height:275px;background:#ffffff;border:1px solid #c8c8c8;"></div>
<svg style="left:0;top:0" width="1280" height="720" viewBox="0 0 1280 720"><g stroke="#f7f7f7" stroke-width="1"><line x1="320.2" y1="241" x2="320.2" y2="513"/><line x1="358.5" y1="241" x2="358.5" y2="513"/><line x1="396.8" y1="241" x2="396.8" y2="513"/><line x1="435.1" y1="241" x2="435.1" y2="513"/><line x1="473.4" y1="241" x2="473.4" y2="513"/><line x1="511.7" y1="241" x2="511.7" y2="513"/><line x1="550.0" y1="241" x2="550.0" y2="513"/><line x1="588.3" y1="241" x2="588.3" y2="513"/><line x1="626.6" y1="241" x2="626.6" y2="513"/><line x1="664.9" y1="241" x2="664.9" y2="513"/><line x1="281" y1="283.5" x2="676" y2="283.5"/><line x1="281" y1="298.2" x2="676" y2="298.2"/><line x1="281" y1="312.9" x2="676" y2="312.9"/><line x1="281" y1="327.6" x2="676" y2="327.6"/><line x1="281" y1="342.3" x2="676" y2="342.3"/><line x1="281" y1="357.0" x2="676" y2="357.0"/><line x1="281" y1="371.7" x2="676" y2="371.7"/><line x1="281" y1="386.4" x2="676" y2="386.4"/><line x1="281" y1="401.1" x2="676" y2="401.1"/><line x1="281" y1="415.8" x2="676" y2="415.8"/><line x1="281" y1="430.5" x2="676" y2="430.5"/><line x1="281" y1="445.2" x2="676" y2="445.2"/><line x1="281" y1="459.9" x2="676" y2="459.9"/><line x1="281" y1="474.6" x2="676" y2="474.6"/><line x1="281" y1="489.3" x2="676" y2="489.3"/><line x1="281" y1="504.0" x2="676" y2="504.0"/></g></svg>
<div class="a" style="left:282px;top:241.7px;width:38px;height:14.800000000000011px;background:#8cca8c;"></div>
<div class="a" style="left:281.9px;top:256.5px;width:38.30000000000001px;height:13.0px;background:#00128a;"></div>
<div class="a" style="left:320.2px;top:256.5px;width:38.30000000000001px;height:13.0px;background:#e8140c;"></div>
<div class="a" style="left:358.5px;top:256.5px;width:38.30000000000001px;height:13.0px;background:#e88a00;"></div>
<div class="a" style="left:396.8px;top:256.5px;width:38.30000000000001px;height:13.0px;background:#e8c000;"></div>
<div class="a" style="left:435.1px;top:256.5px;width:38.299999999999955px;height:13.0px;background:#b8e400;"></div>
<div class="a" style="left:473.4px;top:256.5px;width:38.30000000000001px;height:13.0px;background:#2ed80a;"></div>
<div class="a" style="left:511.7px;top:256.5px;width:38.30000000000001px;height:13.0px;background:#00d00a;"></div>
<div class="a" style="left:550.0px;top:256.5px;width:38.299999999999955px;height:13.0px;background:#12e35a;"></div>
<div class="t" style="left:303.28px;top:243.43px;font-size:9.8px;line-height:12px;color:#1f4a1f;font-weight:bold;">0.0</div>
<div class="t" style="left:341.58px;top:243.43px;font-size:9.8px;line-height:12px;color:#1a1a1a;font-weight:bold;">5.0</div>
<div class="t" style="left:374.43px;top:243.43px;font-size:9.8px;line-height:12px;color:#1a1a1a;font-weight:bold;">10.0</div>
<div class="t" style="left:412.73px;top:243.43px;font-size:9.8px;line-height:12px;color:#1a1a1a;font-weight:bold;">15.0</div>
<div class="t" style="left:451.03px;top:243.43px;font-size:9.8px;line-height:12px;color:#1a1a1a;font-weight:bold;">20.0</div>
<div class="t" style="left:489.33px;top:243.43px;font-size:9.8px;line-height:12px;color:#1a1a1a;font-weight:bold;">25.0</div>
<div class="t" style="left:527.63px;top:243.43px;font-size:9.8px;line-height:12px;color:#1a1a1a;font-weight:bold;">35.0</div>
<div class="t" style="left:565.93px;top:243.43px;font-size:9.8px;line-height:12px;color:#1a1a1a;font-weight:bold;">45.0</div>
<div class="t" style="left:295.01px;top:256.44px;font-size:10.2px;line-height:13px;color:#ffffff;">6000</div>
<div class="t" style="left:333.31px;top:256.44px;font-size:10.2px;line-height:13px;color:#8a0a0a;">5500</div>
<div class="t" style="left:371.61px;top:256.44px;font-size:10.2px;line-height:13px;color:#5a3000;">6500</div>
<div class="t" style="left:409.91px;top:256.44px;font-size:10.2px;line-height:13px;color:#5a4a00;">7000</div>
<div class="t" style="left:448.21px;top:256.44px;font-size:10.2px;line-height:13px;color:#3a4a00;">7500</div>
<div class="t" style="left:486.51px;top:256.44px;font-size:10.2px;line-height:13px;color:#0a4a0a;">8500</div>
<div class="t" style="left:524.81px;top:256.44px;font-size:10.2px;line-height:13px;color:#0a3a0a;">9000</div>
<div class="t" style="left:563.11px;top:256.44px;font-size:10.2px;line-height:13px;color:#0a4a2a;">9500</div>
<svg style="left:295px;top:257px" width="12" height="12"><circle cx="5.5" cy="5.5" r="4.2" fill="#4a90e8" opacity="0.75"/></svg>
<div class="a" style="left:204px;top:528px;width:995px;height:14px;background:#8aabd8;"></div>
<div class="t" style="left:206.50px;top:528.94px;font-size:10.2px;line-height:13px;color:#1b2f4d;transform:scaleX(0.9167);transform-origin:left center;">Data Manager - Playback</div>
<svg style="left:1186px;top:529px" width="10" height="12" viewBox="0 0 10 12"><path d="M2.5 1.5h5M3.5 1.5v5M6.5 1.5v5M1.5 6.5h7M5 6.5v4.5" stroke="#fff" stroke-width="1" fill="none"/></svg>
<div class="a" style="left:204px;top:542px;width:995px;height:3px;background:#f0f0f0;"></div>
<div class="a" style="left:204px;top:544px;width:995px;height:24px;background:#fdfdfd;border:1px solid #7d7d7d;border-bottom:none;"></div>
<div class="t" style="left:209.80px;top:549.74px;font-size:10.2px;line-height:13px;color:#333;transform:scaleX(0.8948);transform-origin:left center;">Close Playback</div>
<div class="a" style="left:280px;top:548px;width:1px;height:17px;background:#d4d4d4;"></div>
<svg style="left:285px;top:550px" width="13" height="13"><path d="M1 1.2l10.5 5.3L1 11.8z" fill="#1fc41f"/></svg>
<div class="a" style="left:305px;top:550px;width:3px;height:13px;background:#9a9a9a;"></div>
<div class="a" style="left:311px;top:550px;width:3px;height:13px;background:#9a9a9a;"></div>
<div class="t" style="left:321.25px;top:549.74px;font-size:10.2px;line-height:13px;color:#333;transform:scaleX(0.8614);transform-origin:left center;">Rate:</div>
<div class="a" style="left:346px;top:547px;width:72px;height:19px;background:#ffffff;"></div>
<div class="t" style="left:350.00px;top:550.24px;font-size:10.2px;line-height:13px;color:#333;transform:scaleX(0.9412);transform-origin:left center;">1</div>
<svg style="left:407px;top:555px" width="6" height="4"><path d="M0 0h5l-2.5 3z" fill="#333"/></svg>
<div class="a" style="left:420px;top:548px;width:1px;height:17px;background:#d4d4d4;"></div>
<div class="t" style="left:425.50px;top:549.74px;font-size:10.2px;line-height:13px;color:#444;transform:scaleX(0.9050);transform-origin:left center;">Channels</div>
<div class="a" style="left:472px;top:548px;width:1px;height:17px;background:#d4d4d4;"></div>
<div class="t" style="left:477.00px;top:549.74px;font-size:10.2px;line-height:13px;color:#111;font-weight:bold;transform:scaleX(0.8761);transform-origin:left center;">Cursor Position:</div>
<div class="t" style="left:552.00px;top:549.74px;font-size:10.2px;line-height:13px;color:#333;transform:scaleX(0.8816);transform-origin:left center;">6.529</div>
<div class="t" style="left:580.00px;top:549.74px;font-size:10.2px;line-height:13px;color:#333;transform:scaleX(0.8313);transform-origin:left center;">(sec.ms)</div>
<div class="a" style="left:204px;top:567px;width:995px;height:86px;background:#000;"></div>
<svg style="left:0;top:0" width="1280" height="720" viewBox="0 0 1280 720"><defs><clipPath id="chc"><rect x="205" y="568" width="994" height="84"/></clipPath></defs><g clip-path="url(#chc)"><polyline points="205,571.8 1199,571.8" fill="none" stroke="#c98a68" stroke-width="1.4" stroke-opacity="1"/><polyline points="205,571.8 346,571.8" fill="none" stroke="#8cc08c" stroke-width="1.4" stroke-opacity="1"/><polyline points="205,648.4 1199,648.4" fill="none" stroke="#9c1a1a" stroke-width="2.4" stroke-opacity="1"/><polyline points="240,595 500,595" fill="none" stroke="#8c1414" stroke-width="1.3" stroke-opacity="1"/><polyline points="205,609 1199,609.5" fill="none" stroke="#d69c9c" stroke-width="1.8" stroke-opacity="1"/><polyline points="205,612.5 520,612.5" fill="none" stroke="#e2d26e" stroke-width="1.3" stroke-opacity="1"/><polyline points="205,628 360,628" fill="none" stroke="#8c1414" stroke-width="1.2" stroke-opacity="1"/><polyline points="360,628 1199,628" fill="none" stroke="#b07a7a" stroke-width="1.2" stroke-opacity="1"/><polyline points="205,635.8 1199,635.5" fill="none" stroke="#8c6242" stroke-width="1.3" stroke-opacity="1"/><polyline points="205,617.5 1199,618" fill="none" stroke="#8cbad6" stroke-width="1.3" stroke-opacity="1"/><polyline points="840,601.8 1199,601.7" fill="none" stroke="#809fbd" stroke-width="1.3" stroke-opacity="1"/><polyline points="960,599 1199,599" fill="none" stroke="#b51c1c" stroke-width="1.3" stroke-opacity="1"/><polyline points="205,591 330,591 345,590 380,588 400,587 408,591 420,589 450,587 500,584 560,581 640,577 700,575 745,572 800,572" fill="none" stroke="#809fbd" stroke-width="1.3" stroke-opacity="1"/><polyline points="205,595 240,596 260,598 300,600 325,602 350,600 360,588 375,580 415,581 420,583 435,580 520,580 640,580 680,579 720,578 800,574" fill="none" stroke="#8cc08c" stroke-width="1.3" stroke-opacity="1"/><polyline points="215,587 224,586 232,590 239,588 250,593 257,591 265,589 282,588 290,590 297,591 306,590 313,594 322,588 330,584 338,577 346,572" fill="none" stroke="#eba33c" stroke-width="1.3" stroke-opacity="1"/><circle cx="215" cy="587" r="1.9" fill="#eba33c"/><circle cx="224" cy="586" r="1.9" fill="#eba33c"/><circle cx="232" cy="590" r="1.9" fill="#eba33c"/><circle cx="239" cy="588" r="1.9" fill="#eba33c"/><circle cx="250" cy="593" r="1.9" fill="#eba33c"/><circle cx="257" cy="591" r="1.9" fill="#eba33c"/><circle cx="265" cy="589" r="1.9" fill="#eba33c"/><circle cx="282" cy="588" r="1.9" fill="#eba33c"/><circle cx="290" cy="590" r="1.9" fill="#eba33c"/><circle cx="297" cy="591" r="1.9" fill="#eba33c"/><circle cx="306" cy="590" r="1.9" fill="#eba33c"/><circle cx="313" cy="594" r="1.9" fill="#eba33c"/><circle cx="322" cy="588" r="1.9" fill="#eba33c"/><circle cx="330" cy="584" r="1.9" fill="#eba33c"/><circle cx="338" cy="577" r="1.9" fill="#eba33c"/><circle cx="346" cy="572" r="1.9" fill="#eba33c"/><polyline points="205,607 300,607 360,607 400,603 440,599 480,596 520,592 560,588 600,585 640,583 680,581 740,577 780,574 800,572" fill="none" stroke="#b51c1c" stroke-width="1.8" stroke-opacity="1"/><polyline points="205,606 360,606 400,602 440,598 480,595 520,591 600,584 680,578 760,575 800,572" fill="none" stroke="#e6dde6" stroke-width="1.0" stroke-opacity="1"/><polyline points="205,612 400,610 440,606 480,602 520,600 560,595 600,592 640,590 680,587 740,582 780,578 800,576" fill="none" stroke="#e2d26e" stroke-width="1.3" stroke-opacity="1"/><polyline points="205,619 300,618 440,608 480,606 520,603 600,597 680,589 760,584 800,583" fill="none" stroke="#7cc07c" stroke-width="1.1" stroke-opacity="1"/><polyline points="205,618.8 300,619 360,618 390,622 410,627 420,628 430,620 445,618 470,621 500,622 530,621 560,623 580,623 600,626 610,624 640,626 680,628 700,630 740,633 780,634 800,633 840,628" fill="none" stroke="#b9a0a8" stroke-width="1.2" stroke-opacity="1"/><polyline points="205,623.8 360,620 400,616 460,617 500,616" fill="none" stroke="#7cc07c" stroke-width="1.1" stroke-opacity="1"/><polyline points="213,630 235,631 260,632 300,632 360,636 375,638 390,641 405,644 420,647 430,648" fill="none" stroke="#f2b2b2" stroke-width="1.1" stroke-opacity="1"/><circle cx="213" cy="630" r="1.7" fill="#f2b2b2"/><circle cx="235" cy="631" r="1.7" fill="#f2b2b2"/><circle cx="260" cy="632" r="1.7" fill="#f2b2b2"/><circle cx="300" cy="632" r="1.7" fill="#f2b2b2"/><circle cx="360" cy="636" r="1.7" fill="#f2b2b2"/><circle cx="375" cy="638" r="1.7" fill="#f2b2b2"/><circle cx="390" cy="641" r="1.7" fill="#f2b2b2"/><circle cx="405" cy="644" r="1.7" fill="#f2b2b2"/><circle cx="420" cy="647" r="1.7" fill="#f2b2b2"/><circle cx="430" cy="648" r="1.7" fill="#f2b2b2"/><polyline points="205,634.4 300,634 340,633 360,630 400,627 440,622 480,619 520,613 560,606 600,601 640,597 680,593 720,590 760,587 795,585" fill="none" stroke="#e8d49a" stroke-width="1.6" stroke-opacity="1"/><polyline points="680,634 720,636 740,641 780,643 800,643 840,640" fill="none" stroke="#d8b070" stroke-width="1.3" stroke-opacity="1"/><polyline points="205,632 340,632" fill="none" stroke="#f0d890" stroke-width="1.0" stroke-opacity="1"/><circle cx="205" cy="632" r="1.6" fill="#f0d890"/><circle cx="340" cy="632" r="1.6" fill="#f0d890"/><polyline points="205,643 300,644 360,637 420,641 480,644 520,645 700,646" fill="none" stroke="#8c1414" stroke-width="1.6" stroke-opacity="1"/><polyline points="680,616 720,614 760,611 800,603 840,601.8" fill="none" stroke="#809fbd" stroke-width="1.2" stroke-opacity="1"/><polyline points="380,617 440,617 520,620 600,622 680,625 720,630 760,634 800,636" fill="none" stroke="#a8a8b0" stroke-width="1.1" stroke-opacity="1"/><polyline points="600,627 650,630 700,634 740,638 760,640 800,643" fill="none" stroke="#b8a0a0" stroke-width="1.1" stroke-opacity="1"/><polyline points="205,613 380,613 520,613 680,614 760,613" fill="none" stroke="#c8c8d0" stroke-width="1.0" stroke-opacity="1"/><polyline points="205,648 215,572" fill="none" stroke="#eba33c" stroke-width="1.2" stroke-opacity="1"/><polyline points="207,640 216,572" fill="none" stroke="#b9a0a8" stroke-width="1.1" stroke-opacity="1"/><polyline points="229,648 237,572 245,648" fill="none" stroke="#7cc07c" stroke-width="1.2" stroke-opacity="1"/><polyline points="487,648 495,572 503,648" fill="none" stroke="#7cc07c" stroke-width="1.2" stroke-opacity="1"/><polyline points="584,648 592,572 600,648" fill="none" stroke="#7cc07c" stroke-width="1.2" stroke-opacity="1"/><polyline points="768,648 776,572 784,648" fill="none" stroke="#7cc07c" stroke-width="1.2" stroke-opacity="1"/><polyline points="907,648 915,572 923,648" fill="none" stroke="#7cc07c" stroke-width="1.2" stroke-opacity="1"/><polyline points="1002,648 1010,572 1018,648" fill="none" stroke="#7cc07c" stroke-width="1.2" stroke-opacity="1"/><polyline points="751.5,573 751.5,648" fill="none" stroke="#b8d0e8" stroke-width="1.2" stroke-opacity="1" stroke-dasharray="3 2"/><polyline points="795,572 800,583 803,598 805,610 810,612 820,614 830,620 840,630 850,640 855,650" fill="none" stroke="#e2d26e" stroke-width="1.6" stroke-opacity="1"/><polyline points="800,572 805,590 815,600 825,615 835,628 845,640 850,650" fill="none" stroke="#ece8b0" stroke-width="1.2" stroke-opacity="1"/><polyline points="800,572 810,585 815,592 820,590 830,592 840,600 860,610 880,620 960,630 1000,645" fill="none" stroke="#7cc07c" stroke-width="1.2" stroke-opacity="1"/><polyline points="785,575 800,590 810,605 820,615 825,630 830,650" fill="none" stroke="#c0c0c0" stroke-width="1.1" stroke-opacity="1"/><polyline points="815,572 822,600 828,620 832,650" fill="none" stroke="#7cc07c" stroke-width="1.1" stroke-opacity="1"/><polyline points="840,572 855,580 870,600 880,620 900,640 910,650" fill="none" stroke="#809fbd" stroke-width="1.1" stroke-opacity="1"/><polyline points="830,583 905,583" fill="none" stroke="#b51c1c" stroke-width="1.8" stroke-opacity="1"/><polyline points="850,578 860,590 870,610 875,630 880,650" fill="none" stroke="#b51c1c" stroke-width="2.0" stroke-opacity="1"/><polyline points="890,575 930,575 935,590 950,605" fill="none" stroke="#b51c1c" stroke-width="1.6" stroke-opacity="1"/><polyline points="800,640 810,625 815,622 820,630 825,645" fill="none" stroke="#e09090" stroke-width="1.2" stroke-opacity="1"/><polyline points="820,640 840,640 880,642" fill="none" stroke="#e0d080" stroke-width="1.2" stroke-opacity="1"/><polyline points="840,650 850,630 860,610 870,595 880,585 900,575" fill="none" stroke="#d0d0d8" stroke-width="1.1" stroke-opacity="1"/><polyline points="850,575 900,590 950,605 1000,620" fill="none" stroke="#809fbd" stroke-width="1.1" stroke-opacity="1"/><polyline points="790,620 800,628 812,636 830,645 840,650" fill="none" stroke="#d8b8a8" stroke-width="1.1" stroke-opacity="1"/><polyline points="860,572 880,590 895,610 905,630 915,650" fill="none" stroke="#b9a0a8" stroke-width="1.1" stroke-opacity="1"/><polyline points="870,650 885,620 900,600 920,585 940,572" fill="none" stroke="#a0c8a0" stroke-width="1.1" stroke-opacity="1"/><polyline points="840,590 880,592 940,590 950,588 960,586 975,587 990,590 1000,594 1020,590 1033,584 1050,585 1080,585 1100,585 1130,586 1140,588 1150,585 1170,587 1180,588 1190,584 1199,586" fill="none" stroke="#b9a0a8" stroke-width="1.3" stroke-opacity="1"/><polyline points="905,573 917,588 925,608 933,628 937,637 942,642 948,640 955,630 970,622 990,632 1000,635 1012,625 1020,607 1027,588 1033,578 1040,588 1048,600 1055,610 1060,617 1068,621 1075,627 1082,630 1090,632 1100,633 1115,633 1130,632 1145,630 1160,627 1175,623 1190,622 1199,622" fill="none" stroke="#eba33c" stroke-width="1.4" stroke-opacity="1"/><circle cx="905" cy="573" r="2.0" fill="#eba33c"/><circle cx="917" cy="588" r="2.0" fill="#eba33c"/><circle cx="925" cy="608" r="2.0" fill="#eba33c"/><circle cx="933" cy="628" r="2.0" fill="#eba33c"/><circle cx="937" cy="637" r="2.0" fill="#eba33c"/><circle cx="942" cy="642" r="2.0" fill="#eba33c"/><circle cx="948" cy="640" r="2.0" fill="#eba33c"/><circle cx="955" cy="630" r="2.0" fill="#eba33c"/><circle cx="970" cy="622" r="2.0" fill="#eba33c"/><circle cx="990" cy="632" r="2.0" fill="#eba33c"/><circle cx="1000" cy="635" r="2.0" fill="#eba33c"/><circle cx="1012" cy="625" r="2.0" fill="#eba33c"/><circle cx="1020" cy="607" r="2.0" fill="#eba33c"/><circle cx="1027" cy="588" r="2.0" fill="#eba33c"/><circle cx="1033" cy="578" r="2.0" fill="#eba33c"/><circle cx="1040" cy="588" r="2.0" fill="#eba33c"/><circle cx="1048" cy="600" r="2.0" fill="#eba33c"/><circle cx="1055" cy="610" r="2.0" fill="#eba33c"/><circle cx="1060" cy="617" r="2.0" fill="#eba33c"/><circle cx="1068" cy="621" r="2.0" fill="#eba33c"/><circle cx="1075" cy="627" r="2.0" fill="#eba33c"/><circle cx="1082" cy="630" r="2.0" fill="#eba33c"/><circle cx="1090" cy="632" r="2.0" fill="#eba33c"/><circle cx="1100" cy="633" r="2.0" fill="#eba33c"/><circle cx="1115" cy="633" r="2.0" fill="#eba33c"/><circle cx="1130" cy="632" r="2.0" fill="#eba33c"/><circle cx="1145" cy="630" r="2.0" fill="#eba33c"/><circle cx="1160" cy="627" r="2.0" fill="#eba33c"/><circle cx="1175" cy="623" r="2.0" fill="#eba33c"/><circle cx="1190" cy="622" r="2.0" fill="#eba33c"/><circle cx="1199" cy="622" r="2.0" fill="#eba33c"/><polyline points="940,630 950,624 960,622 970,625 985,630 1000,622 1015,592 1025,582 1033,598 1040,615 1047,622 1060,622 1080,623 1100,621 1120,620 1140,619 1160,616 1180,616 1199,615" fill="none" stroke="#f2b2b2" stroke-width="1.2" stroke-opacity="1"/><circle cx="940" cy="630" r="1.9" fill="#f2b2b2"/><circle cx="950" cy="624" r="1.9" fill="#f2b2b2"/><circle cx="960" cy="622" r="1.9" fill="#f2b2b2"/><circle cx="970" cy="625" r="1.9" fill="#f2b2b2"/><circle cx="985" cy="630" r="1.9" fill="#f2b2b2"/><circle cx="1000" cy="622" r="1.9" fill="#f2b2b2"/><circle cx="1015" cy="592" r="1.9" fill="#f2b2b2"/><circle cx="1025" cy="582" r="1.9" fill="#f2b2b2"/><circle cx="1033" cy="598" r="1.9" fill="#f2b2b2"/><circle cx="1040" cy="615" r="1.9" fill="#f2b2b2"/><circle cx="1047" cy="622" r="1.9" fill="#f2b2b2"/><circle cx="1060" cy="622" r="1.9" fill="#f2b2b2"/><circle cx="1080" cy="623" r="1.9" fill="#f2b2b2"/><circle cx="1100" cy="621" r="1.9" fill="#f2b2b2"/><circle cx="1120" cy="620" r="1.9" fill="#f2b2b2"/><circle cx="1140" cy="619" r="1.9" fill="#f2b2b2"/><circle cx="1160" cy="616" r="1.9" fill="#f2b2b2"/><circle cx="1180" cy="616" r="1.9" fill="#f2b2b2"/><circle cx="1199" cy="615" r="1.9" fill="#f2b2b2"/><polyline points="960,648 980,620 1000,620 1020,600 1030,572 1040,572 1050,585 1070,598 1085,607 1100,608 1120,610 1150,605 1180,602 1199,601" fill="none" stroke="#c8c8c8" stroke-width="1.2" stroke-opacity="1"/><polyline points="1010,645 1030,630 1060,620 1080,622 1100,626 1130,628 1160,624 1199,625" fill="none" stroke="#809fbd" stroke-width="1.2" stroke-opacity="1"/><polyline points="840,640 900,643 940,645 1000,646 1199,647" fill="none" stroke="#e2d26e" stroke-width="1.6" stroke-opacity="1"/><polyline points="940,643.9 1199,643.9" fill="none" stroke="#9ad09a" stroke-width="1.2" stroke-opacity="1"/><polyline points="860,635 1199,635" fill="none" stroke="#b8b890" stroke-width="1.2" stroke-opacity="1" stroke-dasharray="14 3"/><polyline points="880,560 900,600 930,640 940,650" fill="none" stroke="#9a9ad0" stroke-width="1.0" stroke-opacity="1"/></g></svg>
<svg style="left:479px;top:605px" width="12" height="16" viewBox="0 0 12 16"><path d="M1 1v12l3-3 2.5 5 2-1-2.5-4.8h4z" fill="#fff" stroke="#222" stroke-width="0.8"/></svg>
<div class="a" style="left:204px;top:652px;width:995px;height:18px;background:#f0f0f0;"></div>
<div class="a" style="left:205px;top:652px;width:123px;height:16px;background:#ffffff;border:1px solid #cfcfcf;border-top:none;border-radius:0 0 3px 3px;"></div>
<div class="a" style="left:211px;top:655px;width:2.5px;height:10px;background:#2222aa;"></div>
<div class="a" style="left:215px;top:655px;width:2.5px;height:10px;background:#2222aa;"></div>
<div class="t" style="left:221.60px;top:653.34px;font-size:10.2px;line-height:13px;color:#333;transform:scaleX(0.8750);transform-origin:left center;">Data Manager - Playback</div>
<div class="a" style="left:328px;top:653px;width:44px;height:15px;background:#f3f3f3;border:1px solid #d6d6d6;border-top:none;border-left:none;"></div>
<div class="t" style="left:333.30px;top:655.14px;font-size:10.2px;line-height:13px;color:#8a8a8a;transform:scaleX(0.8270);transform-origin:left center;">Devices</div>
<div class="a" style="left:64px;top:670px;width:1152px;height:18px;background:#f0f0f0;"></div>
<div class="a" style="left:203px;top:669px;width:996px;height:1px;background:#dcdcdc;"></div>
<div class="a" style="left:65px;top:672px;width:112px;height:14px;background:#007a00;"></div>
<div class="t" style="left:99.32px;top:673.54px;font-size:10px;line-height:12px;color:#c8f5c8;font-weight:bold;transform:scaleX(0.9225);transform-origin:center center;">Playback</div>
<div class="a" style="left:178.5px;top:672px;width:92.5px;height:13px;background:#04a804;"></div>
<div class="t" style="left:1167.62px;top:673.63px;font-size:9.4px;line-height:12px;color:#222;font-weight:bold;">0 DTCs</div>
<div class="a" style="left:64px;top:688px;width:1152px;height:32px;background:#101318;"></div>
<div class="a" style="left:64px;top:688px;width:38px;height:32px;background:#0b0f16;"></div>
<svg style="left:75px;top:696px" width="16" height="16" viewBox="0 0 16 16"><path d="M1 2.3l5.6-.8v6H1zM7.4 1.4L15 .3v7.2H7.4zM1 8.3h5.6v6L1 13.5zM7.4 8.3H15v7.2l-7.6-1.1z" fill="#fff"/></svg>
<div class="a" style="left:102px;top:688px;width:276px;height:32px;background:#f2f2f2;"></div>
<svg style="left:109px;top:695px" width="18" height="18"><circle cx="9" cy="9" r="7" fill="none" stroke="#111" stroke-width="2"/></svg>
<div class="t" style="left:134.00px;top:697.16px;font-size:12.2px;line-height:15px;color:#333;transform:scaleX(0.9182);transform-origin:left center;">Type here to search</div>
<svg style="left:355px;top:696px" width="12" height="16" viewBox="0 0 12 16"><rect x="3.5" y="0.5" width="5" height="9" rx="2.5" fill="none" stroke="#555" stroke-width="1"/><path d="M1.5 7.5a4.5 4.5 0 0 0 9 0M6 12v3M3.5 15h5" fill="none" stroke="#555" stroke-width="1"/></svg>
<svg style="left:389px;top:697px" width="15" height="14" viewBox="0 0 15 14"><g fill="none" stroke="#fff" stroke-width="1.2"><rect x="2.5" y="3.5" width="7" height="7"/><path d="M1 1.5h10M1 12.5h10M12.5 2v2M12.5 6v2M12.5 10v2"/></g></svg>
<svg style="left:428px;top:695px" width="18" height="18" viewBox="0 0 18 18"><path d="M16 10H5.5c.3 2.8 2.5 4.3 5 4.3 2 0 3.7-.7 5-1.7v3.2C14 16.8 12.2 17.3 10 17.3 5 17.3 1.5 14 1.5 9c0-4.6 3-8.3 7.8-8.3C13.8.7 16.6 4 16.6 8.5zM5.7 7.3h6.8C12.3 5.3 11 4 9 4 7.3 4 6 5.3 5.7 7.3z" fill="#1e78d8"/></svg>
<svg style="left:468px;top:696px" width="18" height="16" viewBox="0 0 18 16"><path d="M1 2h6l1.5 1.5H17V15H1z" fill="#f5cf5a"/><rect x="1" y="6" width="16" height="9" fill="#f9dd7a"/><rect x="6" y="9" width="6" height="3" fill="#2c8ad8"/></svg>
<svg style="left:507px;top:695px" width="18" height="18" viewBox="0 0 18 18"><rect x="1" y="2" width="16" height="15" fill="#f6f2c0"/><path d="M2 9l4 5 9-12" fill="none" stroke="#2a9a4a" stroke-width="2"/><path d="M3 4h6M3 7h4" stroke="#d03030" stroke-width="1.5"/><path d="M12 14l4-6" stroke="#3050d0" stroke-width="1.5"/></svg>
<div class="a" style="left:536px;top:688px;width:38px;height:32px;background:#343638;"></div>
<svg style="left:545px;top:695px" width="20" height="18" viewBox="0 0 20 18"><rect x="1" y="2" width="18" height="15" rx="3" fill="#1a1a1a"/><path d="M6 4h3l-1.2 3.5h3L12 4h3l-3.8 11h-3l1.3-4h-3l-1.3 4h-3z" fill="#f3c21b"/><path d="M13 1l4 0-2 3z" fill="#f3c21b"/></svg>
<svg style="left:585px;top:695px" width="18" height="18" viewBox="0 0 18 18"><defs><radialGradient id="gb" cx="0.35" cy="0.35" r="0.7"><stop offset="0" stop-color="#8fb8d8"/><stop offset="0.6" stop-color="#2f5f85"/><stop offset="1" stop-color="#16324a"/></radialGradient></defs><circle cx="9" cy="9" r="8" fill="url(#gb)"/></svg>
<div class="a" style="left:500px;top:718px;width:32px;height:2px;background:#7fa4d2;"></div>
<div class="a" style="left:536px;top:718px;width:38px;height:2px;background:#7fa4d2;"></div>
<div class="a" style="left:584px;top:718px;width:27px;height:2px;background:#7fa4d2;"></div>
<svg style="left:1015px;top:696px" width="18" height="16" viewBox="0 0 18 16"><g fill="none" stroke="#fff" stroke-width="1.1"><circle cx="11" cy="4" r="2.3"/><path d="M7.5 10c.5-2.5 2-3.5 3.5-3.5s3 1 3.5 3.5"/><circle cx="6" cy="8.5" r="2.3"/><path d="M2.5 14.5c.5-2.5 2-3.5 3.5-3.5s3 1 3.5 3.5"/></g></svg>
<svg style="left:1046px;top:700px" width="12" height="8"><path d="M1 6.5l5-5 5 5" fill="none" stroke="#fff" stroke-width="1.2"/></svg>
<svg style="left:1064px;top:698px" width="16" height="12" viewBox="0 0 16 12"><rect x="3.5" y="2.5" width="11" height="7" fill="none" stroke="#fff" stroke-width="1.1"/><rect x="5" y="4" width="8" height="4" fill="#fff"/><rect x="0.5" y="0.5" width="3" height="4" fill="none" stroke="#fff" stroke-width="1"/></svg>
<svg style="left:1083px;top:697px" width="16" height="14" viewBox="0 0 16 14"><g fill="none" stroke="#fff" stroke-width="1.1"><rect x="5.5" y="1.5" width="9" height="7"/><path d="M10 8.5v3M7 12.5h6M1.5 3.5h3v8"/></g></svg>
<svg style="left:1101px;top:697px" width="18" height="14" viewBox="0 0 18 14"><g fill="none" stroke="#fff" stroke-width="1.1"><path d="M1.5 5h3l4-3.5v11L4.5 9h-3z"/><path d="M11 4.5c1 1.5 1 3.5 0 5M13 3c1.8 2 1.8 6 0 8M15 1.5c2.5 3 2.5 8 0 11"/></g></svg>
<div class="t" style="left:1127.24px;top:690.94px;font-size:10.5px;line-height:13px;color:#fff;transform:scaleX(0.9086);transform-origin:center center;">9:21 AM</div>
<div class="t" style="left:1123.15px;top:705.64px;font-size:10.5px;line-height:13px;color:#fff;transform:scaleX(0.9206);transform-origin:center center;">1/22/2019</div>
<svg style="left:1182px;top:696px" width="16" height="16" viewBox="0 0 16 16"><path d="M1.5 1.5h13v10h-5l-1.5 2.5-1.5-2.5h-5z" fill="none" stroke="#fff" stroke-width="1.1"/></svg>
<div class="a" style="left:1211px;top:690px;width:1px;height:30px;background:#3a3d42;"></div>
</div></body></html>
